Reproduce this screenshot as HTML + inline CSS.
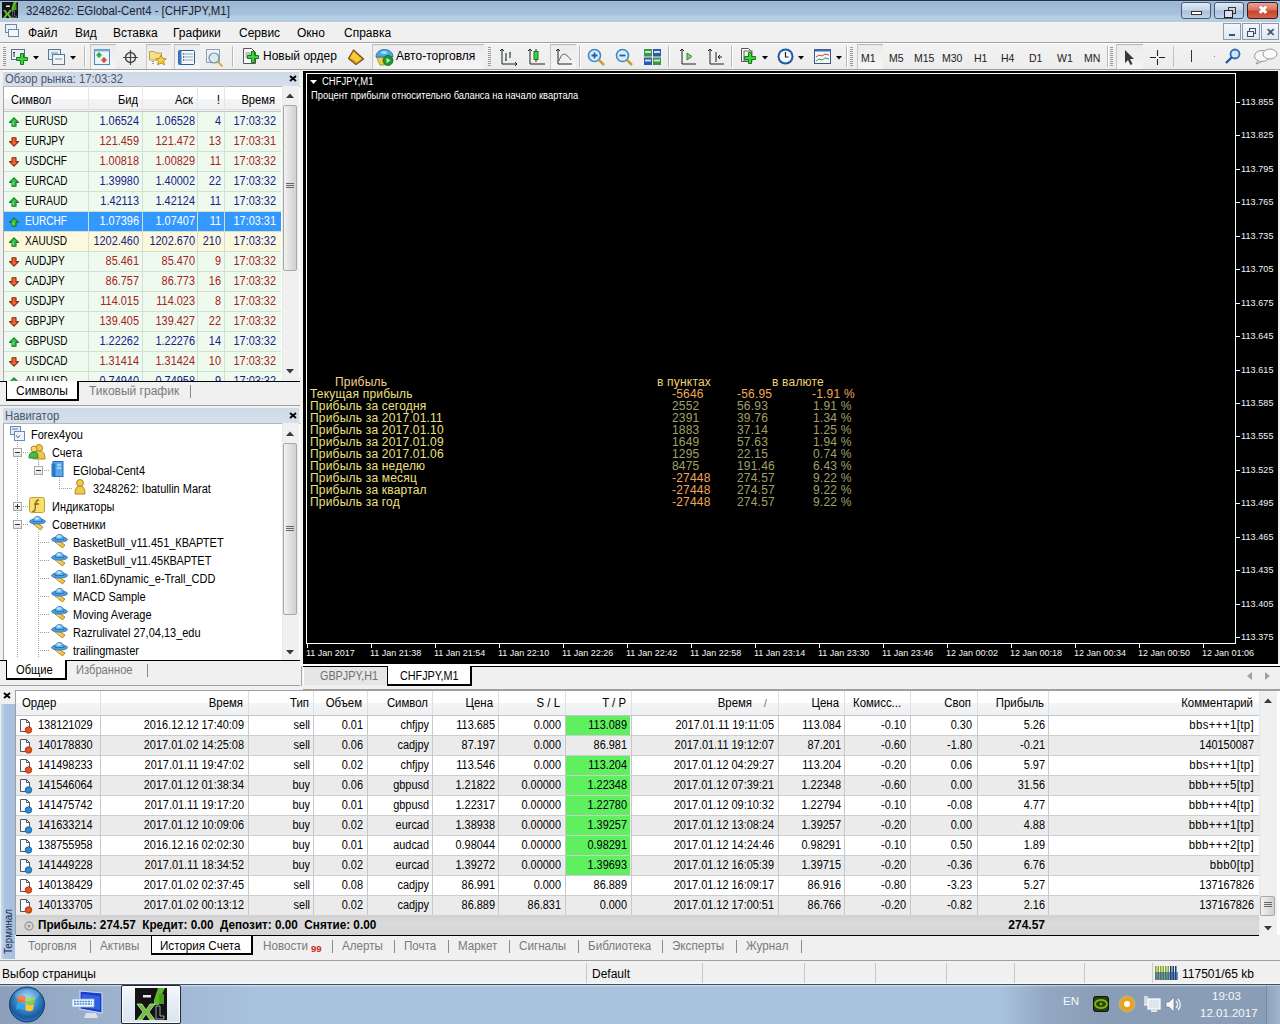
<!DOCTYPE html>
<html><head><meta charset="utf-8"><style>*{margin:0;padding:0;box-sizing:border-box}
html,body{width:1280px;height:1024px;overflow:hidden;background:#f0f0f0;font-family:"Liberation Sans",sans-serif;font-size:12px;color:#000;position:relative}
.a{position:absolute;display:block}
.t{position:absolute;white-space:nowrap;line-height:1.2}
.wb{border:1px solid #4a5a70;border-radius:3px;background:linear-gradient(#dfe9f5,#c3d4e7 45%,#a9c0dc 55%,#c2d6ea)}
</style></head><body>
<div class="a" style="left:0;top:0;width:1280px;height:22px;background:linear-gradient(#1a3350 0,#1a3350 1px,#a7bdd6 1px,#a7bdd6 2px,#9db5cf 2px,#9fb8d2 4px,#a9c3de 15px,#acd0ec 16px,#acd0ec 18px,#b6cfe2 18px,#b6cfe2 20px,#bccad8 20px,#bccad8 22px)"></div>
<svg class="a" style="left:2px;top:2px" width="16" height="16" viewBox="0 0 32 32"><rect x="0" y="0" width="32" height="32" fill="#141414"/><path d="M8 7h8v3H8z" fill="#e8e8f0"/><path d="M23 0h7l-6 12v5h-5v-5z" fill="#5cb82c"/><path d="M24 6h5v10h-5z" fill="#4a9a22"/><path d="M2 16h5l4 6 4-6h5l-6 8 6 8h-5l-4-6-4 6H2l6-8z" fill="#6cc03a"/><path d="M21 18h4v10h4v3h-8z" fill="#141414" stroke="#cfd8e0" stroke-width=".7"/></svg>
<div class="t" style="left:26px;top:4px;font-size:12px;color:#1e1e2e;transform:scaleX(.95);transform-origin:0 0">3248262: EGlobal-Cent4 - [CHFJPY,M1]</div>
<div class="a wb" style="left:1181px;top:2px;width:30px;height:17px"><div class="a" style="left:9px;top:8px;width:11px;height:4px;border:1px solid #333;background:#fff"></div></div>
<div class="a wb" style="left:1214px;top:2px;width:30px;height:17px"><div class="a" style="left:13px;top:4px;width:8px;height:7px;border:1px solid #333"></div><div class="a" style="left:9px;top:7px;width:9px;height:8px;border:1.5px solid #222;background:#dde"></div></div>
<div class="a" style="left:1247px;top:2px;width:31px;height:17px;border:1px solid #3a1c1c;border-radius:3px;background:linear-gradient(#e8a594,#d9735c 45%,#c8452c 55%,#d5634a)"><div class="a" style="left:0;top:0px;width:29px;text-align:center;color:#fff;font-size:12px;line-height:15px;font-weight:bold;text-shadow:0 0 1px #600">&#x2716;</div></div>
<div class="a" style="left:0;top:22px;width:1280px;height:21px;background:linear-gradient(#eef4fa 0,#eef4fa 1px,#f0f0f0 1px);border-bottom:1px solid #a3a3a3"></div>
<div class="a" style="left:5px;top:24px;width:12px;height:9px;border:1px solid #6a86a8;background:#e8f0f8"></div>
<div class="a" style="left:8px;top:29px;width:11px;height:8px;border:1px solid #6a86a8;background:#f4f8fc"></div>
<div class="t" style="left:28px;top:26px;font-size:12px">Файл</div>
<div class="t" style="left:75px;top:26px;font-size:12px">Вид</div>
<div class="t" style="left:113px;top:26px;font-size:12px">Вставка</div>
<div class="t" style="left:173px;top:26px;font-size:12px">Графики</div>
<div class="t" style="left:239px;top:26px;font-size:12px">Сервис</div>
<div class="t" style="left:297px;top:26px;font-size:12px">Окно</div>
<div class="t" style="left:344px;top:26px;font-size:12px">Справка</div>
<div class="a" style="left:1223px;top:23px;width:18px;height:17px;border:1px solid #8c9cb0;background:linear-gradient(#f4f7fb,#dfe7f1)"><div class="a" style="left:5px;top:10px;width:6px;height:2px;background:#3c5070"></div></div>
<div class="a" style="left:1242px;top:23px;width:18px;height:17px;border:1px solid #8c9cb0;background:linear-gradient(#f4f7fb,#dfe7f1)"><div class="a" style="left:6px;top:4px;width:7px;height:6px;border:1px solid #3c5070"></div><div class="a" style="left:4px;top:7px;width:7px;height:6px;border:1px solid #3c5070;background:#eef2f7"></div></div>
<div class="a" style="left:1261px;top:23px;width:18px;height:17px;border:1px solid #8c9cb0;background:linear-gradient(#f4f7fb,#dfe7f1)"><div class="a" style="left:0;top:1px;width:16px;text-align:center;color:#3c5070;font-size:11px;line-height:14px;font-weight:bold">&#x2715;</div></div>
<div class="a" style="left:0;top:43px;width:1280px;height:27px;background:linear-gradient(#f3f3f3,#ececec);border-bottom:1px solid #a0a0a0"></div>
<div class="a" style="left:0;top:43px;width:1280px;height:1px;background:#fff"></div>
<svg class="a" style="left:3px;top:47px" width="3" height="20" viewBox="0 0 3 20"><rect x="0" y="0" width="3" height="1" fill="#9a9a9a"/><rect x="0" y="2" width="3" height="1" fill="#9a9a9a"/><rect x="0" y="4" width="3" height="1" fill="#9a9a9a"/><rect x="0" y="6" width="3" height="1" fill="#9a9a9a"/><rect x="0" y="8" width="3" height="1" fill="#9a9a9a"/><rect x="0" y="10" width="3" height="1" fill="#9a9a9a"/><rect x="0" y="12" width="3" height="1" fill="#9a9a9a"/><rect x="0" y="14" width="3" height="1" fill="#9a9a9a"/><rect x="0" y="16" width="3" height="1" fill="#9a9a9a"/><rect x="0" y="18" width="3" height="1" fill="#9a9a9a"/></svg>
<svg class="a" style="left:11px;top:49px" width="20" height="17" viewBox="0 0 20 17"><rect x="0.5" y="0.5" width="13" height="10" fill="#e8f2fb" stroke="#5a6e86"/><path d="M3 3v5M2 4l1-1 1 1" stroke="#334" fill="none"/><g transform="translate(5,4)"><path d="M4.5 .5h3v4h4v3h-4v4h-3v-4h-4v-3h4z" fill="#3ed43e" stroke="#177a17" stroke-width="1"/></g></svg>
<svg class="a" style="left:33px;top:56px" width="6" height="4" viewBox="0 0 6 4"><path d="M0 0H6L3 3.5Z" fill="#000"/></svg>
<svg class="a" style="left:48px;top:49px" width="18" height="17" viewBox="0 0 18 17"><rect x="0.5" y="0.5" width="12" height="10" fill="#e4eef8" stroke="#5a7896"/><rect x="4.5" y="5.5" width="12" height="10" fill="#eef4fa" stroke="#5a7896"/><path d="M3 4h7M7 10h7" stroke="#7a8ea6"/></svg>
<svg class="a" style="left:70px;top:56px" width="6" height="4" viewBox="0 0 6 4"><path d="M0 0H6L3 3.5Z" fill="#000"/></svg>
<div class="a" style="left:84px;top:46px;width:1px;height:21px;background:#b8b8b8"></div><div class="a" style="left:85px;top:46px;width:1px;height:21px;background:#fff"></div>
<div class="a" style="left:90px;top:44px;width:26px;height:25px;border-top:1px solid #b5b5b5;border-left:1px solid #c8c8c8;background:linear-gradient(#ebebeb,#f5f5f5)"></div>
<svg class="a" style="left:94px;top:49px" width="16" height="16" viewBox="0 0 16 16"><rect x="0.5" y="0.5" width="15" height="15" fill="#eaf6fb" stroke="#4a88b8"/><rect x="0.5" y="0.5" width="15" height="2" fill="#7fb3d9"/><path d="M5 3l3.5 3.5H6.5v2h-3v-2H1.5z" fill="#2eaa3e"/><path d="M10 14l3.5-3.5h-2v-2h-3v2h-2z" fill="#e0443a"/></svg>
<svg class="a" style="left:123px;top:50px" width="16" height="16" viewBox="0 0 16 16"><circle cx="7.5" cy="7.5" r="5" fill="none" stroke="#444" stroke-width="1.4"/><path d="M7.5 0v15M0 7.5h15" stroke="#444" stroke-width="1.2"/></svg>
<div class="a" style="left:146px;top:44px;width:25px;height:25px;border-top:1px solid #b5b5b5;border-left:1px solid #c8c8c8;background:linear-gradient(#ebebeb,#f5f5f5)"></div>
<svg class="a" style="left:149px;top:49px" width="19" height="17" viewBox="0 0 19 17"><path d="M0.5 2.5h5l1 1.5h6v7h-12z" fill="#f4e08a" stroke="#c2a040"/><path d="M12 6l1.6 3.4 3.6.4-2.7 2.4.8 3.6-3.3-1.9-3.3 1.9.8-3.6-2.7-2.4 3.6-.4z" fill="#f2d040" stroke="#b89020"/><path d="M4 12v4" stroke="#555" stroke-dasharray="1 1"/></svg>
<div class="a" style="left:174px;top:44px;width:26px;height:25px;border-top:1px solid #b5b5b5;border-left:1px solid #c8c8c8;background:linear-gradient(#ebebeb,#f5f5f5)"></div>
<svg class="a" style="left:178px;top:50px" width="17" height="15" viewBox="0 0 17 15"><rect x="0.5" y="0.5" width="16" height="14" rx="1" fill="#f4f8fc" stroke="#2c5a9a"/><rect x="0.5" y="0.5" width="3" height="14" fill="#3c78c0"/><path d="M5 4h10M5 7h10M5 10h10" stroke="#8aa"/><path d="M5 4h1M5 7h1M5 10h1" stroke="#135"/></svg>
<svg class="a" style="left:206px;top:49px" width="19" height="18" viewBox="0 0 19 18"><rect x="0.5" y="0.5" width="13" height="13" fill="#eef3f8" stroke="#8aa0b8"/><circle cx="8" cy="9" r="5" fill="#dce8f2" stroke="#7890a8" stroke-width="1.2"/><path d="M11.5 12.5l5 5" stroke="#d8b040" stroke-width="2"/></svg>
<div class="a" style="left:232px;top:46px;width:1px;height:21px;background:#b8b8b8"></div><div class="a" style="left:233px;top:46px;width:1px;height:21px;background:#fff"></div>
<svg class="a" style="left:243px;top:48px" width="20" height="19" viewBox="0 0 20 19"><path d="M0.5 0.5h8l4 4v11h-12z" fill="#f8f8f8" stroke="#555"/><path d="M2.5 5h6M2.5 7h6M2.5 9h5" stroke="#888"/><g transform="translate(4,3)"><path d="M4.5 .5h3v4h4v3h-4v4h-3v-4h-4v-3h4z" fill="#3ed43e" stroke="#177a17" stroke-width="1"/></g></svg>
<div class="t" style="left:263px;top:49px;font-size:12px">Новый ордер</div>
<svg class="a" style="left:345px;top:48px" width="20" height="18" viewBox="0 0 20 18"><path d="M8.5 2L18.5 11 11 16.5 3.5 10.5Z" fill="#e6b020" stroke="#7a5010" stroke-width="1.2" stroke-linejoin="round"/><path d="M8.5 4L16 11 11 14.5 5.5 10Z" fill="#f4cc40"/><path d="M6 11l5 3" stroke="#c89010"/></svg>
<div class="a" style="left:372px;top:44px;width:112px;height:25px;border-top:1px solid #b5b5b5;border-left:1px solid #c8c8c8;background:linear-gradient(#ebebeb,#f5f5f5)"></div>
<svg class="a" style="left:375px;top:48px" width="19" height="18" viewBox="0 0 19 18"><path d="M1.5 9L9.5 9 9.5 17 5 17Z" fill="#f2d040" stroke="#9a8030" stroke-width=".8"/><path d="M1 9c0-4.5 3.5-7.5 8.5-7.5S18 4.5 18 9z" fill="#4aa8e4" stroke="#2a70b0" stroke-width=".9"/><ellipse cx="9" cy="4.5" rx="3" ry="1.5" fill="#a8dcf8"/><circle cx="13" cy="12.5" r="5" fill="#1e9a2e" stroke="#0a6a1a" stroke-width=".8"/><path d="M11.5 10l4 2.5-4 2.5z" fill="#c8f8c8"/></svg>
<div class="t" style="left:396px;top:49px;font-size:12px">Авто-торговля</div>
<svg class="a" style="left:488px;top:47px" width="3" height="20" viewBox="0 0 3 20"><rect x="0" y="0" width="3" height="1" fill="#9a9a9a"/><rect x="0" y="2" width="3" height="1" fill="#9a9a9a"/><rect x="0" y="4" width="3" height="1" fill="#9a9a9a"/><rect x="0" y="6" width="3" height="1" fill="#9a9a9a"/><rect x="0" y="8" width="3" height="1" fill="#9a9a9a"/><rect x="0" y="10" width="3" height="1" fill="#9a9a9a"/><rect x="0" y="12" width="3" height="1" fill="#9a9a9a"/><rect x="0" y="14" width="3" height="1" fill="#9a9a9a"/><rect x="0" y="16" width="3" height="1" fill="#9a9a9a"/><rect x="0" y="18" width="3" height="1" fill="#9a9a9a"/></svg>
<svg class="a" style="left:500px;top:49px" width="17" height="17" viewBox="0 0 17 17"><path d="M2 0v15h15" stroke="#222" fill="none"/><path d="M0 2l2-2 2 2M15 13l2 2-2 2" stroke="#222" fill="none"/><path d="M6 4v8M5 11h1M10 3v6M10 4h1" stroke="#2a4a2a" stroke-width="1.2"/></svg>
<svg class="a" style="left:528px;top:48px" width="17" height="18" viewBox="0 0 17 18"><path d="M2 1v15h15" stroke="#222" fill="none"/><path d="M0 3l2-2 2 2" stroke="#222" fill="none"/><path d="M8 1v13" stroke="#222"/><rect x="6" y="3.5" width="4" height="8" fill="#35d44a" stroke="#1a7a1a"/></svg>
<div class="a" style="left:550px;top:44px;width:26px;height:25px;border-top:1px solid #b5b5b5;border-left:1px solid #c8c8c8;background:linear-gradient(#ebebeb,#f5f5f5)"></div>
<svg class="a" style="left:556px;top:49px" width="16" height="17" viewBox="0 0 16 17"><path d="M2 0v15h14" stroke="#222" fill="none"/><path d="M0 2l2-2 2 2" stroke="#222" fill="none"/><path d="M3 12c3-9 6-9 12-1" stroke="#555" fill="none"/></svg>
<div class="a" style="left:579px;top:46px;width:1px;height:21px;background:#b8b8b8"></div><div class="a" style="left:580px;top:46px;width:1px;height:21px;background:#fff"></div>
<svg class="a" style="left:587px;top:48px" width="19" height="19" viewBox="0 0 19 19"><circle cx="7.5" cy="7.5" r="6" fill="#d8ecfa" stroke="#3c88c8" stroke-width="1.6"/><path d="M4.5 7.5h6M7.5 4.5v6" stroke="#2060a0" stroke-width="1.8"/><path d="M12 12l5 5" stroke="#c8a030" stroke-width="2.5"/></svg>
<svg class="a" style="left:615px;top:48px" width="19" height="19" viewBox="0 0 19 19"><circle cx="7.5" cy="7.5" r="6" fill="#d8ecfa" stroke="#3c88c8" stroke-width="1.6"/><path d="M4.5 7.5h6" stroke="#2060a0" stroke-width="1.8"/><path d="M12 12l5 5" stroke="#c8a030" stroke-width="2.5"/></svg>
<svg class="a" style="left:644px;top:49px" width="17" height="16" viewBox="0 0 17 16"><rect x="0" y="0" width="8" height="7.5" fill="#3a9a3a"/><rect x="9" y="0" width="8" height="7.5" fill="#2a5ab0"/><rect x="0" y="8.5" width="8" height="7.5" fill="#2a5ab0"/><rect x="9" y="8.5" width="8" height="7.5" fill="#3a9a3a"/><path d="M1 3h6M10 3h6M1 11.5h6M10 11.5h6" stroke="#cde" stroke-width="2"/></svg>
<div class="a" style="left:668px;top:46px;width:1px;height:21px;background:#b8b8b8"></div><div class="a" style="left:669px;top:46px;width:1px;height:21px;background:#fff"></div>
<svg class="a" style="left:680px;top:49px" width="16" height="17" viewBox="0 0 16 17"><path d="M2 0v15h14" stroke="#222" fill="none"/><path d="M0 2l2-2 2 2" stroke="#222" fill="none"/><path d="M7 4v7l5-3.5z" fill="#8c8" stroke="#3a8a3a"/></svg>
<svg class="a" style="left:708px;top:49px" width="16" height="17" viewBox="0 0 16 17"><path d="M2 0v15h14" stroke="#222" fill="none"/><path d="M0 2l2-2 2 2" stroke="#222" fill="none"/><path d="M8 3v10" stroke="#222"/><path d="M14 8H10M12 6l-2 2 2 2" stroke="#222" fill="none"/></svg>
<div class="a" style="left:731px;top:46px;width:1px;height:21px;background:#b8b8b8"></div><div class="a" style="left:732px;top:46px;width:1px;height:21px;background:#fff"></div>
<svg class="a" style="left:741px;top:48px" width="17" height="19" viewBox="0 0 17 19"><path d="M0.5 0.5h7l3 3v10h-10z" fill="#fafafa" stroke="#555"/><rect x="3" y="3" width="8" height="10" fill="#f0f0f0" stroke="#666"/><g transform="translate(3,4)"><path d="M4.5 .5h3v4h4v3h-4v4h-3v-4h-4v-3h4z" fill="#3ed43e" stroke="#177a17" stroke-width="1"/></g></svg>
<svg class="a" style="left:762px;top:56px" width="6" height="4" viewBox="0 0 6 4"><path d="M0 0H6L3 3.5Z" fill="#000"/></svg>
<svg class="a" style="left:777px;top:48px" width="17" height="17" viewBox="0 0 17 17"><circle cx="8.5" cy="8.5" r="8" fill="#1a5aa8"/><circle cx="8.5" cy="8.5" r="6" fill="#f4f8fc"/><path d="M8.5 4v5h3" stroke="#222" stroke-width="1.2" fill="none"/></svg>
<svg class="a" style="left:798px;top:56px" width="6" height="4" viewBox="0 0 6 4"><path d="M0 0H6L3 3.5Z" fill="#000"/></svg>
<svg class="a" style="left:814px;top:49px" width="17" height="15" viewBox="0 0 17 15"><rect x="0.5" y="0.5" width="16" height="14" fill="#f4f8fc" stroke="#3a5a8a"/><rect x="0.5" y="0.5" width="16" height="2" fill="#3a6ab0"/><path d="M2 8l3-2 3 1 3-2 4 1" stroke="#d04040" fill="none"/><path d="M2 12l3-2 3 1 3-2 4 1" stroke="#30a030" fill="none"/></svg>
<svg class="a" style="left:836px;top:56px" width="6" height="4" viewBox="0 0 6 4"><path d="M0 0H6L3 3.5Z" fill="#000"/></svg>
<div class="a" style="left:846px;top:46px;width:1px;height:21px;background:#b8b8b8"></div><div class="a" style="left:847px;top:46px;width:1px;height:21px;background:#fff"></div>
<svg class="a" style="left:850px;top:47px" width="3" height="20" viewBox="0 0 3 20"><rect x="0" y="0" width="3" height="1" fill="#9a9a9a"/><rect x="0" y="2" width="3" height="1" fill="#9a9a9a"/><rect x="0" y="4" width="3" height="1" fill="#9a9a9a"/><rect x="0" y="6" width="3" height="1" fill="#9a9a9a"/><rect x="0" y="8" width="3" height="1" fill="#9a9a9a"/><rect x="0" y="10" width="3" height="1" fill="#9a9a9a"/><rect x="0" y="12" width="3" height="1" fill="#9a9a9a"/><rect x="0" y="14" width="3" height="1" fill="#9a9a9a"/><rect x="0" y="16" width="3" height="1" fill="#9a9a9a"/><rect x="0" y="18" width="3" height="1" fill="#9a9a9a"/></svg>
<div class="a" style="left:857px;top:44px;width:26px;height:25px;border-top:1px solid #b5b5b5;border-left:1px solid #c8c8c8;background:linear-gradient(#ebebeb,#f5f5f5)"></div>
<div class="t" style="left:861px;top:52px;font-size:10.5px;color:#222">M1</div>
<div class="t" style="left:889px;top:52px;font-size:10.5px;color:#222">M5</div>
<div class="t" style="left:914px;top:52px;font-size:10.5px;color:#222">M15</div>
<div class="t" style="left:942px;top:52px;font-size:10.5px;color:#222">M30</div>
<div class="t" style="left:974px;top:52px;font-size:10.5px;color:#222">H1</div>
<div class="t" style="left:1001px;top:52px;font-size:10.5px;color:#222">H4</div>
<div class="t" style="left:1029px;top:52px;font-size:10.5px;color:#222">D1</div>
<div class="t" style="left:1057px;top:52px;font-size:10.5px;color:#222">W1</div>
<div class="t" style="left:1084px;top:52px;font-size:10.5px;color:#222">MN</div>
<div class="a" style="left:1107px;top:46px;width:1px;height:21px;background:#b8b8b8"></div><div class="a" style="left:1108px;top:46px;width:1px;height:21px;background:#fff"></div>
<svg class="a" style="left:1110px;top:47px" width="3" height="20" viewBox="0 0 3 20"><rect x="0" y="0" width="3" height="1" fill="#9a9a9a"/><rect x="0" y="2" width="3" height="1" fill="#9a9a9a"/><rect x="0" y="4" width="3" height="1" fill="#9a9a9a"/><rect x="0" y="6" width="3" height="1" fill="#9a9a9a"/><rect x="0" y="8" width="3" height="1" fill="#9a9a9a"/><rect x="0" y="10" width="3" height="1" fill="#9a9a9a"/><rect x="0" y="12" width="3" height="1" fill="#9a9a9a"/><rect x="0" y="14" width="3" height="1" fill="#9a9a9a"/><rect x="0" y="16" width="3" height="1" fill="#9a9a9a"/><rect x="0" y="18" width="3" height="1" fill="#9a9a9a"/></svg>
<div class="a" style="left:1116px;top:44px;width:27px;height:25px;border-top:1px solid #b5b5b5;border-left:1px solid #c8c8c8;background:linear-gradient(#ebebeb,#f5f5f5)"></div>
<svg class="a" style="left:1124px;top:49px" width="12" height="17" viewBox="0 0 12 17"><path d="M1 1v13l3-3 2.5 5 2-1-2.5-5h4z" fill="#383838"/></svg>
<svg class="a" style="left:1150px;top:50px" width="15" height="15" viewBox="0 0 15 15"><path d="M7.5 0v6M7.5 9v6M0 7.5h6M9 7.5h6" stroke="#222" stroke-width="1.1"/></svg>
<div class="a" style="left:1173px;top:46px;width:1px;height:21px;background:#c0c0c0"></div>
<div class="a" style="left:1191px;top:50px;width:1px;height:12px;background:#333"></div>
<div class="a" style="left:1214px;top:56px;width:1px;height:1px;background:#888"></div>
<svg class="a" style="left:1225px;top:48px" width="16" height="17" viewBox="0 0 16 17"><circle cx="10" cy="6" r="4.5" fill="#cfe6fa" stroke="#2a6ab8" stroke-width="1.8"/><path d="M7 9l-6 6" stroke="#2a5aa0" stroke-width="2.4"/></svg>
<svg class="a" style="left:1253px;top:48px" width="26" height="17" viewBox="0 0 26 17"><ellipse cx="9" cy="8" rx="7.5" ry="5.5" fill="#f8f8f8" stroke="#999"/><ellipse cx="17" cy="6" rx="7" ry="5" fill="#fafafa" stroke="#999"/><path d="M5 13l-2 3 5-2" fill="#fafafa" stroke="#999"/></svg>
<div class="a" style="left:3px;top:70px;width:297px;height:2px;background:#fafafa"></div>
<div class="a" style="left:3px;top:72px;width:296px;height:14px;background:linear-gradient(#cfdae8,#d6e0ec);"></div>
<div class="t" style="left:5px;top:72px;font-size:12px;color:#4a5668;transform:scaleX(.94);transform-origin:0 0">Обзор рынка: 17:03:32</div>
<svg class="a" style="left:289px;top:75px" width="8" height="7" viewBox="0 0 8 7"><path d="M1 1l6 5M7 1L1 6" stroke="#000" stroke-width="1.8"/></svg>
<div class="a" style="left:3px;top:86px;width:297px;height:295px;background:#fff;border-left:1px solid #a9a9a9;border-top:1px solid #b8b8b8"></div>
<div class="a" style="left:4px;top:87px;width:277px;height:25px;background:linear-gradient(#fff 0,#fff 50%,#f3f4f6 50%,#eef0f2);border-bottom:1px solid #c8c8c8"></div>
<div class="a" style="left:4px;top:109px;width:277px;height:1px;background:#dcdcdc"></div>
<div class="a" style="left:88px;top:86px;width:1px;height:24px;background:#e6e6e6"></div>
<div class="a" style="left:142px;top:86px;width:1px;height:24px;background:#e6e6e6"></div>
<div class="a" style="left:197px;top:86px;width:1px;height:24px;background:#e6e6e6"></div>
<div class="a" style="left:224px;top:86px;width:1px;height:24px;background:#e6e6e6"></div>
<div class="t" style="left:11px;top:93px;font-size:12px;transform:scaleX(.93);transform-origin:0 0">Символ</div>
<div class="t" style="left:88px;top:93px;font-size:12px;width:50px;text-align:right;transform:scaleX(.93);transform-origin:100% 0">Бид</div>
<div class="t" style="left:142px;top:93px;font-size:12px;width:51px;text-align:right;transform:scaleX(.93);transform-origin:100% 0">Аск</div>
<div class="t" style="left:197px;top:93px;font-size:12px;width:23px;text-align:right">!</div>
<div class="t" style="left:224px;top:93px;font-size:12px;width:51px;text-align:right;transform:scaleX(.93);transform-origin:100% 0">Время</div>
<div class="a" style="left:4px;top:112px;width:277px;height:20px;background:#effaef;border-bottom:1px solid #d2e0d2"></div>
<div class="a" style="left:88px;top:112px;width:1px;height:20px;background:#d2e0d2"></div>
<div class="a" style="left:142px;top:112px;width:1px;height:20px;background:#d2e0d2"></div>
<div class="a" style="left:197px;top:112px;width:1px;height:20px;background:#d2e0d2"></div>
<div class="a" style="left:224px;top:112px;width:1px;height:20px;background:#d2e0d2"></div>
<svg class="a" style="left:9px;top:117px" width="11" height="10" viewBox="0 0 11 10"><path d="M5 0.8L9.6 5.4H7V9.3H3V5.4H0.4Z" fill="#3cc04c" stroke="#127a22" stroke-width="1.1" stroke-linejoin="round"/><path d="M4 5v3" stroke="#9e9" stroke-width="1"/></svg>
<div class="t" style="left:24.5px;top:114px;font-size:12px;color:#000;transform:scaleX(.84);transform-origin:0 0">EURUSD</div>
<div class="t" style="left:88px;top:114px;font-size:12px;color:#14208c;width:51px;text-align:right;transform:scaleX(.91);transform-origin:100% 0">1.06524</div>
<div class="t" style="left:142px;top:114px;font-size:12px;color:#14208c;width:53px;text-align:right;transform:scaleX(.91);transform-origin:100% 0">1.06528</div>
<div class="t" style="left:197px;top:114px;font-size:12px;color:#14208c;width:24px;text-align:right;transform:scaleX(.91);transform-origin:100% 0">4</div>
<div class="t" style="left:224px;top:114px;font-size:12px;color:#14208c;width:52px;text-align:right;transform:scaleX(.91);transform-origin:100% 0">17:03:32</div>
<div class="a" style="left:4px;top:132px;width:277px;height:20px;background:#effaef;border-bottom:1px solid #d2e0d2"></div>
<div class="a" style="left:88px;top:132px;width:1px;height:20px;background:#d2e0d2"></div>
<div class="a" style="left:142px;top:132px;width:1px;height:20px;background:#d2e0d2"></div>
<div class="a" style="left:197px;top:132px;width:1px;height:20px;background:#d2e0d2"></div>
<div class="a" style="left:224px;top:132px;width:1px;height:20px;background:#d2e0d2"></div>
<svg class="a" style="left:9px;top:137px" width="11" height="10" viewBox="0 0 11 10"><path d="M5 9.2L9.6 4.6H7V0.7H3V4.6H0.4Z" fill="#f06430" stroke="#8a2a10" stroke-width="1.1" stroke-linejoin="round"/></svg>
<div class="t" style="left:24.5px;top:134px;font-size:12px;color:#000;transform:scaleX(.84);transform-origin:0 0">EURJPY</div>
<div class="t" style="left:88px;top:134px;font-size:12px;color:#a82020;width:51px;text-align:right;transform:scaleX(.91);transform-origin:100% 0">121.459</div>
<div class="t" style="left:142px;top:134px;font-size:12px;color:#a82020;width:53px;text-align:right;transform:scaleX(.91);transform-origin:100% 0">121.472</div>
<div class="t" style="left:197px;top:134px;font-size:12px;color:#a82020;width:24px;text-align:right;transform:scaleX(.91);transform-origin:100% 0">13</div>
<div class="t" style="left:224px;top:134px;font-size:12px;color:#a82020;width:52px;text-align:right;transform:scaleX(.91);transform-origin:100% 0">17:03:31</div>
<div class="a" style="left:4px;top:152px;width:277px;height:20px;background:#effaef;border-bottom:1px solid #d2e0d2"></div>
<div class="a" style="left:88px;top:152px;width:1px;height:20px;background:#d2e0d2"></div>
<div class="a" style="left:142px;top:152px;width:1px;height:20px;background:#d2e0d2"></div>
<div class="a" style="left:197px;top:152px;width:1px;height:20px;background:#d2e0d2"></div>
<div class="a" style="left:224px;top:152px;width:1px;height:20px;background:#d2e0d2"></div>
<svg class="a" style="left:9px;top:157px" width="11" height="10" viewBox="0 0 11 10"><path d="M5 9.2L9.6 4.6H7V0.7H3V4.6H0.4Z" fill="#f06430" stroke="#8a2a10" stroke-width="1.1" stroke-linejoin="round"/></svg>
<div class="t" style="left:24.5px;top:154px;font-size:12px;color:#000;transform:scaleX(.84);transform-origin:0 0">USDCHF</div>
<div class="t" style="left:88px;top:154px;font-size:12px;color:#a82020;width:51px;text-align:right;transform:scaleX(.91);transform-origin:100% 0">1.00818</div>
<div class="t" style="left:142px;top:154px;font-size:12px;color:#a82020;width:53px;text-align:right;transform:scaleX(.91);transform-origin:100% 0">1.00829</div>
<div class="t" style="left:197px;top:154px;font-size:12px;color:#a82020;width:24px;text-align:right;transform:scaleX(.91);transform-origin:100% 0">11</div>
<div class="t" style="left:224px;top:154px;font-size:12px;color:#a82020;width:52px;text-align:right;transform:scaleX(.91);transform-origin:100% 0">17:03:32</div>
<div class="a" style="left:4px;top:172px;width:277px;height:20px;background:#effaef;border-bottom:1px solid #d2e0d2"></div>
<div class="a" style="left:88px;top:172px;width:1px;height:20px;background:#d2e0d2"></div>
<div class="a" style="left:142px;top:172px;width:1px;height:20px;background:#d2e0d2"></div>
<div class="a" style="left:197px;top:172px;width:1px;height:20px;background:#d2e0d2"></div>
<div class="a" style="left:224px;top:172px;width:1px;height:20px;background:#d2e0d2"></div>
<svg class="a" style="left:9px;top:177px" width="11" height="10" viewBox="0 0 11 10"><path d="M5 0.8L9.6 5.4H7V9.3H3V5.4H0.4Z" fill="#3cc04c" stroke="#127a22" stroke-width="1.1" stroke-linejoin="round"/><path d="M4 5v3" stroke="#9e9" stroke-width="1"/></svg>
<div class="t" style="left:24.5px;top:174px;font-size:12px;color:#000;transform:scaleX(.84);transform-origin:0 0">EURCAD</div>
<div class="t" style="left:88px;top:174px;font-size:12px;color:#14208c;width:51px;text-align:right;transform:scaleX(.91);transform-origin:100% 0">1.39980</div>
<div class="t" style="left:142px;top:174px;font-size:12px;color:#14208c;width:53px;text-align:right;transform:scaleX(.91);transform-origin:100% 0">1.40002</div>
<div class="t" style="left:197px;top:174px;font-size:12px;color:#14208c;width:24px;text-align:right;transform:scaleX(.91);transform-origin:100% 0">22</div>
<div class="t" style="left:224px;top:174px;font-size:12px;color:#14208c;width:52px;text-align:right;transform:scaleX(.91);transform-origin:100% 0">17:03:32</div>
<div class="a" style="left:4px;top:192px;width:277px;height:20px;background:#effaef;border-bottom:1px solid #d2e0d2"></div>
<div class="a" style="left:88px;top:192px;width:1px;height:20px;background:#d2e0d2"></div>
<div class="a" style="left:142px;top:192px;width:1px;height:20px;background:#d2e0d2"></div>
<div class="a" style="left:197px;top:192px;width:1px;height:20px;background:#d2e0d2"></div>
<div class="a" style="left:224px;top:192px;width:1px;height:20px;background:#d2e0d2"></div>
<svg class="a" style="left:9px;top:197px" width="11" height="10" viewBox="0 0 11 10"><path d="M5 0.8L9.6 5.4H7V9.3H3V5.4H0.4Z" fill="#3cc04c" stroke="#127a22" stroke-width="1.1" stroke-linejoin="round"/><path d="M4 5v3" stroke="#9e9" stroke-width="1"/></svg>
<div class="t" style="left:24.5px;top:194px;font-size:12px;color:#000;transform:scaleX(.84);transform-origin:0 0">EURAUD</div>
<div class="t" style="left:88px;top:194px;font-size:12px;color:#14208c;width:51px;text-align:right;transform:scaleX(.91);transform-origin:100% 0">1.42113</div>
<div class="t" style="left:142px;top:194px;font-size:12px;color:#14208c;width:53px;text-align:right;transform:scaleX(.91);transform-origin:100% 0">1.42124</div>
<div class="t" style="left:197px;top:194px;font-size:12px;color:#14208c;width:24px;text-align:right;transform:scaleX(.91);transform-origin:100% 0">11</div>
<div class="t" style="left:224px;top:194px;font-size:12px;color:#14208c;width:52px;text-align:right;transform:scaleX(.91);transform-origin:100% 0">17:03:32</div>
<div class="a" style="left:4px;top:212px;width:277px;height:20px;background:#3399ff;border-bottom:1px solid #d2e0d2"></div>
<div class="a" style="left:88px;top:212px;width:1px;height:20px;background:#d2e0d2"></div>
<div class="a" style="left:142px;top:212px;width:1px;height:20px;background:#d2e0d2"></div>
<div class="a" style="left:197px;top:212px;width:1px;height:20px;background:#d2e0d2"></div>
<div class="a" style="left:224px;top:212px;width:1px;height:20px;background:#d2e0d2"></div>
<svg class="a" style="left:9px;top:217px" width="11" height="10" viewBox="0 0 11 10"><path d="M5 0.8L9.6 5.4H7V9.3H3V5.4H0.4Z" fill="#3cc04c" stroke="#127a22" stroke-width="1.1" stroke-linejoin="round"/><path d="M4 5v3" stroke="#9e9" stroke-width="1"/></svg>
<div class="t" style="left:24.5px;top:214px;font-size:12px;color:#fff;transform:scaleX(.84);transform-origin:0 0">EURCHF</div>
<div class="t" style="left:88px;top:214px;font-size:12px;color:#ffffff;width:51px;text-align:right;transform:scaleX(.91);transform-origin:100% 0">1.07396</div>
<div class="t" style="left:142px;top:214px;font-size:12px;color:#ffffff;width:53px;text-align:right;transform:scaleX(.91);transform-origin:100% 0">1.07407</div>
<div class="t" style="left:197px;top:214px;font-size:12px;color:#ffffff;width:24px;text-align:right;transform:scaleX(.91);transform-origin:100% 0">11</div>
<div class="t" style="left:224px;top:214px;font-size:12px;color:#ffffff;width:52px;text-align:right;transform:scaleX(.91);transform-origin:100% 0">17:03:31</div>
<div class="a" style="left:4px;top:232px;width:277px;height:20px;background:#fbf8dc;border-bottom:1px solid #d2e0d2"></div>
<div class="a" style="left:88px;top:232px;width:1px;height:20px;background:#d2e0d2"></div>
<div class="a" style="left:142px;top:232px;width:1px;height:20px;background:#d2e0d2"></div>
<div class="a" style="left:197px;top:232px;width:1px;height:20px;background:#d2e0d2"></div>
<div class="a" style="left:224px;top:232px;width:1px;height:20px;background:#d2e0d2"></div>
<svg class="a" style="left:9px;top:237px" width="11" height="10" viewBox="0 0 11 10"><path d="M5 0.8L9.6 5.4H7V9.3H3V5.4H0.4Z" fill="#3cc04c" stroke="#127a22" stroke-width="1.1" stroke-linejoin="round"/><path d="M4 5v3" stroke="#9e9" stroke-width="1"/></svg>
<div class="t" style="left:24.5px;top:234px;font-size:12px;color:#000;transform:scaleX(.84);transform-origin:0 0">XAUUSD</div>
<div class="t" style="left:88px;top:234px;font-size:12px;color:#14208c;width:51px;text-align:right;transform:scaleX(.91);transform-origin:100% 0">1202.460</div>
<div class="t" style="left:142px;top:234px;font-size:12px;color:#14208c;width:53px;text-align:right;transform:scaleX(.91);transform-origin:100% 0">1202.670</div>
<div class="t" style="left:197px;top:234px;font-size:12px;color:#14208c;width:24px;text-align:right;transform:scaleX(.91);transform-origin:100% 0">210</div>
<div class="t" style="left:224px;top:234px;font-size:12px;color:#14208c;width:52px;text-align:right;transform:scaleX(.91);transform-origin:100% 0">17:03:32</div>
<div class="a" style="left:4px;top:252px;width:277px;height:20px;background:#effaef;border-bottom:1px solid #d2e0d2"></div>
<div class="a" style="left:88px;top:252px;width:1px;height:20px;background:#d2e0d2"></div>
<div class="a" style="left:142px;top:252px;width:1px;height:20px;background:#d2e0d2"></div>
<div class="a" style="left:197px;top:252px;width:1px;height:20px;background:#d2e0d2"></div>
<div class="a" style="left:224px;top:252px;width:1px;height:20px;background:#d2e0d2"></div>
<svg class="a" style="left:9px;top:257px" width="11" height="10" viewBox="0 0 11 10"><path d="M5 9.2L9.6 4.6H7V0.7H3V4.6H0.4Z" fill="#f06430" stroke="#8a2a10" stroke-width="1.1" stroke-linejoin="round"/></svg>
<div class="t" style="left:24.5px;top:254px;font-size:12px;color:#000;transform:scaleX(.84);transform-origin:0 0">AUDJPY</div>
<div class="t" style="left:88px;top:254px;font-size:12px;color:#a82020;width:51px;text-align:right;transform:scaleX(.91);transform-origin:100% 0">85.461</div>
<div class="t" style="left:142px;top:254px;font-size:12px;color:#a82020;width:53px;text-align:right;transform:scaleX(.91);transform-origin:100% 0">85.470</div>
<div class="t" style="left:197px;top:254px;font-size:12px;color:#a82020;width:24px;text-align:right;transform:scaleX(.91);transform-origin:100% 0">9</div>
<div class="t" style="left:224px;top:254px;font-size:12px;color:#a82020;width:52px;text-align:right;transform:scaleX(.91);transform-origin:100% 0">17:03:32</div>
<div class="a" style="left:4px;top:272px;width:277px;height:20px;background:#effaef;border-bottom:1px solid #d2e0d2"></div>
<div class="a" style="left:88px;top:272px;width:1px;height:20px;background:#d2e0d2"></div>
<div class="a" style="left:142px;top:272px;width:1px;height:20px;background:#d2e0d2"></div>
<div class="a" style="left:197px;top:272px;width:1px;height:20px;background:#d2e0d2"></div>
<div class="a" style="left:224px;top:272px;width:1px;height:20px;background:#d2e0d2"></div>
<svg class="a" style="left:9px;top:277px" width="11" height="10" viewBox="0 0 11 10"><path d="M5 9.2L9.6 4.6H7V0.7H3V4.6H0.4Z" fill="#f06430" stroke="#8a2a10" stroke-width="1.1" stroke-linejoin="round"/></svg>
<div class="t" style="left:24.5px;top:274px;font-size:12px;color:#000;transform:scaleX(.84);transform-origin:0 0">CADJPY</div>
<div class="t" style="left:88px;top:274px;font-size:12px;color:#a82020;width:51px;text-align:right;transform:scaleX(.91);transform-origin:100% 0">86.757</div>
<div class="t" style="left:142px;top:274px;font-size:12px;color:#a82020;width:53px;text-align:right;transform:scaleX(.91);transform-origin:100% 0">86.773</div>
<div class="t" style="left:197px;top:274px;font-size:12px;color:#a82020;width:24px;text-align:right;transform:scaleX(.91);transform-origin:100% 0">16</div>
<div class="t" style="left:224px;top:274px;font-size:12px;color:#a82020;width:52px;text-align:right;transform:scaleX(.91);transform-origin:100% 0">17:03:32</div>
<div class="a" style="left:4px;top:292px;width:277px;height:20px;background:#effaef;border-bottom:1px solid #d2e0d2"></div>
<div class="a" style="left:88px;top:292px;width:1px;height:20px;background:#d2e0d2"></div>
<div class="a" style="left:142px;top:292px;width:1px;height:20px;background:#d2e0d2"></div>
<div class="a" style="left:197px;top:292px;width:1px;height:20px;background:#d2e0d2"></div>
<div class="a" style="left:224px;top:292px;width:1px;height:20px;background:#d2e0d2"></div>
<svg class="a" style="left:9px;top:297px" width="11" height="10" viewBox="0 0 11 10"><path d="M5 9.2L9.6 4.6H7V0.7H3V4.6H0.4Z" fill="#f06430" stroke="#8a2a10" stroke-width="1.1" stroke-linejoin="round"/></svg>
<div class="t" style="left:24.5px;top:294px;font-size:12px;color:#000;transform:scaleX(.84);transform-origin:0 0">USDJPY</div>
<div class="t" style="left:88px;top:294px;font-size:12px;color:#a82020;width:51px;text-align:right;transform:scaleX(.91);transform-origin:100% 0">114.015</div>
<div class="t" style="left:142px;top:294px;font-size:12px;color:#a82020;width:53px;text-align:right;transform:scaleX(.91);transform-origin:100% 0">114.023</div>
<div class="t" style="left:197px;top:294px;font-size:12px;color:#a82020;width:24px;text-align:right;transform:scaleX(.91);transform-origin:100% 0">8</div>
<div class="t" style="left:224px;top:294px;font-size:12px;color:#a82020;width:52px;text-align:right;transform:scaleX(.91);transform-origin:100% 0">17:03:32</div>
<div class="a" style="left:4px;top:312px;width:277px;height:20px;background:#effaef;border-bottom:1px solid #d2e0d2"></div>
<div class="a" style="left:88px;top:312px;width:1px;height:20px;background:#d2e0d2"></div>
<div class="a" style="left:142px;top:312px;width:1px;height:20px;background:#d2e0d2"></div>
<div class="a" style="left:197px;top:312px;width:1px;height:20px;background:#d2e0d2"></div>
<div class="a" style="left:224px;top:312px;width:1px;height:20px;background:#d2e0d2"></div>
<svg class="a" style="left:9px;top:317px" width="11" height="10" viewBox="0 0 11 10"><path d="M5 9.2L9.6 4.6H7V0.7H3V4.6H0.4Z" fill="#f06430" stroke="#8a2a10" stroke-width="1.1" stroke-linejoin="round"/></svg>
<div class="t" style="left:24.5px;top:314px;font-size:12px;color:#000;transform:scaleX(.84);transform-origin:0 0">GBPJPY</div>
<div class="t" style="left:88px;top:314px;font-size:12px;color:#a82020;width:51px;text-align:right;transform:scaleX(.91);transform-origin:100% 0">139.405</div>
<div class="t" style="left:142px;top:314px;font-size:12px;color:#a82020;width:53px;text-align:right;transform:scaleX(.91);transform-origin:100% 0">139.427</div>
<div class="t" style="left:197px;top:314px;font-size:12px;color:#a82020;width:24px;text-align:right;transform:scaleX(.91);transform-origin:100% 0">22</div>
<div class="t" style="left:224px;top:314px;font-size:12px;color:#a82020;width:52px;text-align:right;transform:scaleX(.91);transform-origin:100% 0">17:03:32</div>
<div class="a" style="left:4px;top:332px;width:277px;height:20px;background:#effaef;border-bottom:1px solid #d2e0d2"></div>
<div class="a" style="left:88px;top:332px;width:1px;height:20px;background:#d2e0d2"></div>
<div class="a" style="left:142px;top:332px;width:1px;height:20px;background:#d2e0d2"></div>
<div class="a" style="left:197px;top:332px;width:1px;height:20px;background:#d2e0d2"></div>
<div class="a" style="left:224px;top:332px;width:1px;height:20px;background:#d2e0d2"></div>
<svg class="a" style="left:9px;top:337px" width="11" height="10" viewBox="0 0 11 10"><path d="M5 0.8L9.6 5.4H7V9.3H3V5.4H0.4Z" fill="#3cc04c" stroke="#127a22" stroke-width="1.1" stroke-linejoin="round"/><path d="M4 5v3" stroke="#9e9" stroke-width="1"/></svg>
<div class="t" style="left:24.5px;top:334px;font-size:12px;color:#000;transform:scaleX(.84);transform-origin:0 0">GBPUSD</div>
<div class="t" style="left:88px;top:334px;font-size:12px;color:#14208c;width:51px;text-align:right;transform:scaleX(.91);transform-origin:100% 0">1.22262</div>
<div class="t" style="left:142px;top:334px;font-size:12px;color:#14208c;width:53px;text-align:right;transform:scaleX(.91);transform-origin:100% 0">1.22276</div>
<div class="t" style="left:197px;top:334px;font-size:12px;color:#14208c;width:24px;text-align:right;transform:scaleX(.91);transform-origin:100% 0">14</div>
<div class="t" style="left:224px;top:334px;font-size:12px;color:#14208c;width:52px;text-align:right;transform:scaleX(.91);transform-origin:100% 0">17:03:32</div>
<div class="a" style="left:4px;top:352px;width:277px;height:20px;background:#effaef;border-bottom:1px solid #d2e0d2"></div>
<div class="a" style="left:88px;top:352px;width:1px;height:20px;background:#d2e0d2"></div>
<div class="a" style="left:142px;top:352px;width:1px;height:20px;background:#d2e0d2"></div>
<div class="a" style="left:197px;top:352px;width:1px;height:20px;background:#d2e0d2"></div>
<div class="a" style="left:224px;top:352px;width:1px;height:20px;background:#d2e0d2"></div>
<svg class="a" style="left:9px;top:357px" width="11" height="10" viewBox="0 0 11 10"><path d="M5 9.2L9.6 4.6H7V0.7H3V4.6H0.4Z" fill="#f06430" stroke="#8a2a10" stroke-width="1.1" stroke-linejoin="round"/></svg>
<div class="t" style="left:24.5px;top:354px;font-size:12px;color:#000;transform:scaleX(.84);transform-origin:0 0">USDCAD</div>
<div class="t" style="left:88px;top:354px;font-size:12px;color:#a82020;width:51px;text-align:right;transform:scaleX(.91);transform-origin:100% 0">1.31414</div>
<div class="t" style="left:142px;top:354px;font-size:12px;color:#a82020;width:53px;text-align:right;transform:scaleX(.91);transform-origin:100% 0">1.31424</div>
<div class="t" style="left:197px;top:354px;font-size:12px;color:#a82020;width:24px;text-align:right;transform:scaleX(.91);transform-origin:100% 0">10</div>
<div class="t" style="left:224px;top:354px;font-size:12px;color:#a82020;width:52px;text-align:right;transform:scaleX(.91);transform-origin:100% 0">17:03:32</div>
<div class="a" style="left:4px;top:372px;width:277px;height:20px;background:#effaef;border-bottom:1px solid #d2e0d2"></div>
<div class="a" style="left:88px;top:372px;width:1px;height:20px;background:#d2e0d2"></div>
<div class="a" style="left:142px;top:372px;width:1px;height:20px;background:#d2e0d2"></div>
<div class="a" style="left:197px;top:372px;width:1px;height:20px;background:#d2e0d2"></div>
<div class="a" style="left:224px;top:372px;width:1px;height:20px;background:#d2e0d2"></div>
<svg class="a" style="left:9px;top:377px" width="11" height="10" viewBox="0 0 11 10"><path d="M5 0.8L9.6 5.4H7V9.3H3V5.4H0.4Z" fill="#3cc04c" stroke="#127a22" stroke-width="1.1" stroke-linejoin="round"/><path d="M4 5v3" stroke="#9e9" stroke-width="1"/></svg>
<div class="t" style="left:24.5px;top:374px;font-size:12px;color:#000;transform:scaleX(.84);transform-origin:0 0">AUDUSD</div>
<div class="t" style="left:88px;top:374px;font-size:12px;color:#14208c;width:51px;text-align:right;transform:scaleX(.91);transform-origin:100% 0">0.74940</div>
<div class="t" style="left:142px;top:374px;font-size:12px;color:#14208c;width:53px;text-align:right;transform:scaleX(.91);transform-origin:100% 0">0.74958</div>
<div class="t" style="left:197px;top:374px;font-size:12px;color:#14208c;width:24px;text-align:right;transform:scaleX(.91);transform-origin:100% 0">9</div>
<div class="t" style="left:224px;top:374px;font-size:12px;color:#14208c;width:52px;text-align:right;transform:scaleX(.91);transform-origin:100% 0">17:03:32</div>
<div class="a" style="left:282px;top:86px;width:17px;height:295px;background:#f0f0f0;border-left:1px solid #e8e8e8"></div>
<svg class="a" style="left:286px;top:93px" width="8" height="5" viewBox="0 0 8 5"><path d="M0 5L4 0.5 8 5Z" fill="#3a3a3a"/></svg>
<svg class="a" style="left:286px;top:369px" width="8" height="5" viewBox="0 0 8 5"><path d="M0 0L4 4.5 8 0Z" fill="#3a3a3a"/></svg>
<div class="a" style="left:283px;top:105px;width:14px;height:166px;border:1px solid #a8a8a8;border-radius:2px;background:linear-gradient(90deg,#f2f2f2,#e0e0e0 50%,#d0d0d0)"></div>
<svg class="a" style="left:286px;top:183px" width="8" height="6" viewBox="0 0 8 6"><path d="M0 0.5h8M0 2.5h8M0 4.5h8" stroke="#666"/></svg>
<div class="a" style="left:0px;top:381px;width:300px;height:25px;background:#f0f0f0;border-top:1px solid #000;border-bottom:1px solid #a0a0a0"></div>
<div class="a" style="left:6px;top:381px;width:73px;height:20px;background:#fff;border:1px solid #000;border-top:none;border-bottom:2px solid #000;border-right:2px solid #000"></div>
<div class="t" style="left:16px;top:384px;font-size:12px;color:#000">Символы</div>
<div class="t" style="left:89px;top:384px;font-size:12px;color:#7a7a7a">Тиковый график</div>
<div class="a" style="left:190px;top:385px;width:1px;height:13px;background:#888"></div>
<div class="a" style="left:3px;top:408px;width:296px;height:15px;background:linear-gradient(#cfdae8,#d6e0ec);"></div>
<div class="t" style="left:5px;top:409px;font-size:12px;color:#4a5668;transform:scaleX(.94);transform-origin:0 0">Навигатор</div>
<svg class="a" style="left:289px;top:412px" width="8" height="7" viewBox="0 0 8 7"><path d="M1 1l6 5M7 1L1 6" stroke="#000" stroke-width="1.8"/></svg>
<div class="a" style="left:3px;top:423px;width:297px;height:237px;background:#fff;border-left:1px solid #a9a9a9;border-top:1px solid #b8b8b8"></div>
<div class="a" style="left:17px;top:440px;width:1px;height:218px;background:repeating-linear-gradient(#a0a0a0 0 1px,transparent 1px 2px)"></div>
<div class="a" style="left:17px;top:452px;width:11px;height:1px;background:repeating-linear-gradient(90deg,#a0a0a0 0 1px,transparent 1px 2px)"></div>
<div class="a" style="left:17px;top:506px;width:11px;height:1px;background:repeating-linear-gradient(90deg,#a0a0a0 0 1px,transparent 1px 2px)"></div>
<div class="a" style="left:17px;top:524px;width:11px;height:1px;background:repeating-linear-gradient(90deg,#a0a0a0 0 1px,transparent 1px 2px)"></div>
<div class="a" style="left:38px;top:460px;width:1px;height:10px;background:repeating-linear-gradient(#a0a0a0 0 1px,transparent 1px 2px)"></div>
<div class="a" style="left:38px;top:470px;width:12px;height:1px;background:repeating-linear-gradient(90deg,#a0a0a0 0 1px,transparent 1px 2px)"></div>
<div class="a" style="left:59px;top:478px;width:1px;height:10px;background:repeating-linear-gradient(#a0a0a0 0 1px,transparent 1px 2px)"></div>
<div class="a" style="left:59px;top:488px;width:13px;height:1px;background:repeating-linear-gradient(90deg,#a0a0a0 0 1px,transparent 1px 2px)"></div>
<div class="a" style="left:38px;top:532px;width:1px;height:126px;background:repeating-linear-gradient(#a0a0a0 0 1px,transparent 1px 2px)"></div>
<div class="a" style="left:38px;top:542px;width:12px;height:1px;background:repeating-linear-gradient(90deg,#a0a0a0 0 1px,transparent 1px 2px)"></div>
<div class="a" style="left:38px;top:560px;width:12px;height:1px;background:repeating-linear-gradient(90deg,#a0a0a0 0 1px,transparent 1px 2px)"></div>
<div class="a" style="left:38px;top:578px;width:12px;height:1px;background:repeating-linear-gradient(90deg,#a0a0a0 0 1px,transparent 1px 2px)"></div>
<div class="a" style="left:38px;top:596px;width:12px;height:1px;background:repeating-linear-gradient(90deg,#a0a0a0 0 1px,transparent 1px 2px)"></div>
<div class="a" style="left:38px;top:614px;width:12px;height:1px;background:repeating-linear-gradient(90deg,#a0a0a0 0 1px,transparent 1px 2px)"></div>
<div class="a" style="left:38px;top:632px;width:12px;height:1px;background:repeating-linear-gradient(90deg,#a0a0a0 0 1px,transparent 1px 2px)"></div>
<div class="a" style="left:38px;top:650px;width:12px;height:1px;background:repeating-linear-gradient(90deg,#a0a0a0 0 1px,transparent 1px 2px)"></div>
<div class="a" style="left:13px;top:448px;width:9px;height:9px;border:1px solid #a8a8a8;background:linear-gradient(#fff,#e4e4e4)"></div><div class="a" style="left:15px;top:452px;width:5px;height:1px;background:#333"></div>
<div class="a" style="left:34px;top:466px;width:9px;height:9px;border:1px solid #a8a8a8;background:linear-gradient(#fff,#e4e4e4)"></div><div class="a" style="left:36px;top:470px;width:5px;height:1px;background:#333"></div>
<div class="a" style="left:13px;top:502px;width:9px;height:9px;border:1px solid #a8a8a8;background:linear-gradient(#fff,#e4e4e4)"></div><div class="a" style="left:15px;top:506px;width:5px;height:1px;background:#333"></div><div class="a" style="left:17px;top:504px;width:1px;height:5px;background:#333"></div>
<div class="a" style="left:13px;top:520px;width:9px;height:9px;border:1px solid #a8a8a8;background:linear-gradient(#fff,#e4e4e4)"></div><div class="a" style="left:15px;top:524px;width:5px;height:1px;background:#333"></div>
<svg class="a" style="left:10px;top:426px" width="15" height="15" viewBox="0 0 15 15"><rect x="0.5" y="0.5" width="10" height="8" fill="#e4eef8" stroke="#6a8ab0"/><rect x="4.5" y="5.5" width="10" height="9" fill="#f0f6fc" stroke="#6a8ab0"/><path d="M6 9l2 3 2-3M2 3h6" stroke="#5a7aa0" fill="none"/></svg>
<div class="t" style="left:31px;top:428px;font-size:12px;transform:scaleX(.915);transform-origin:0 0">Forex4you</div>
<svg class="a" style="left:28px;top:443px" width="18" height="17" viewBox="0 0 18 17"><circle cx="11" cy="5" r="3.5" fill="#f2c84a" stroke="#b0882a"/><path d="M5 16c0-6 2-8 6-8s6 2 6 8z" fill="#f2c84a" stroke="#b0882a"/><circle cx="6" cy="6" r="3" fill="#f8d860" stroke="#b0882a"/><path d="M1 15c0-5 2-6 5-6s4 1 4 6z" fill="#4ab84a" stroke="#2a8a2a"/></svg>
<div class="t" style="left:52px;top:446px;font-size:12px;transform:scaleX(.915);transform-origin:0 0">Счета</div>
<svg class="a" style="left:51px;top:461px" width="14" height="16" viewBox="0 0 14 16"><rect x="2" y="0.5" width="10" height="15" fill="#5aa8e8" stroke="#2a6aa8"/><rect x="0.5" y="2.5" width="4" height="13" fill="#2a78c8"/><path d="M6 4h4M6 7h4" stroke="#dff"/></svg>
<div class="t" style="left:73px;top:464px;font-size:12px;transform:scaleX(.915);transform-origin:0 0">EGlobal-Cent4</div>
<svg class="a" style="left:74px;top:479px" width="12" height="16" viewBox="0 0 12 16"><circle cx="6" cy="4" r="3.5" fill="#f2c84a" stroke="#b0882a"/><path d="M1 15c0-6 2-8 5-8s5 2 5 8z" fill="#f2c84a" stroke="#b0882a"/></svg>
<div class="t" style="left:93px;top:482px;font-size:12px;transform:scaleX(.915);transform-origin:0 0">3248262: Ibatullin Marat</div>
<svg class="a" style="left:29px;top:497px" width="16" height="16" viewBox="0 0 16 16"><rect x="0.5" y="0.5" width="15" height="15" rx="2" fill="#f8e070" stroke="#c0a030"/><path d="M10 3c-3 0-3 2-3.5 5L6 13c-.5 1.5-2 1.5-2.5 1M5 7h5" stroke="#8a6a10" stroke-width="1.3" fill="none"/></svg>
<div class="t" style="left:52px;top:500px;font-size:12px;transform:scaleX(.915);transform-origin:0 0">Индикаторы</div>
<svg class="a" style="left:29px;top:515px" width="17" height="16" viewBox="0 0 17 16"><path d="M4 9l4-1 6 4-2.5 3z" fill="#f2c440" stroke="#9a7a20" stroke-width=".8"/><path d="M5 8.5c1 2 3 2.5 5 2" stroke="#e8e0a0" fill="none"/><ellipse cx="8.5" cy="6.5" rx="8" ry="2.6" fill="#4aa0e0" stroke="#2a6aa8" stroke-width=".8"/><path d="M4 6.5c0-3 2-5 4.5-5s4.5 2 4.5 5z" fill="#58b0ec" stroke="#2a6aa8" stroke-width=".8"/><ellipse cx="8" cy="3.5" rx="2.5" ry="1.3" fill="#bfe4fa"/></svg>
<div class="t" style="left:52px;top:518px;font-size:12px;transform:scaleX(.915);transform-origin:0 0">Советники</div>
<svg class="a" style="left:51px;top:533px" width="17" height="16" viewBox="0 0 17 16"><path d="M4 9l4-1 6 4-2.5 3z" fill="#f2c440" stroke="#9a7a20" stroke-width=".8"/><path d="M5 8.5c1 2 3 2.5 5 2" stroke="#e8e0a0" fill="none"/><ellipse cx="8.5" cy="6.5" rx="8" ry="2.6" fill="#4aa0e0" stroke="#2a6aa8" stroke-width=".8"/><path d="M4 6.5c0-3 2-5 4.5-5s4.5 2 4.5 5z" fill="#58b0ec" stroke="#2a6aa8" stroke-width=".8"/><ellipse cx="8" cy="3.5" rx="2.5" ry="1.3" fill="#bfe4fa"/></svg>
<div class="t" style="left:73px;top:536px;font-size:12px;transform:scaleX(.915);transform-origin:0 0">BasketBull_v11.451_КВАРТЕТ</div>
<svg class="a" style="left:51px;top:551px" width="17" height="16" viewBox="0 0 17 16"><path d="M4 9l4-1 6 4-2.5 3z" fill="#f2c440" stroke="#9a7a20" stroke-width=".8"/><path d="M5 8.5c1 2 3 2.5 5 2" stroke="#e8e0a0" fill="none"/><ellipse cx="8.5" cy="6.5" rx="8" ry="2.6" fill="#4aa0e0" stroke="#2a6aa8" stroke-width=".8"/><path d="M4 6.5c0-3 2-5 4.5-5s4.5 2 4.5 5z" fill="#58b0ec" stroke="#2a6aa8" stroke-width=".8"/><ellipse cx="8" cy="3.5" rx="2.5" ry="1.3" fill="#bfe4fa"/></svg>
<div class="t" style="left:73px;top:554px;font-size:12px;transform:scaleX(.915);transform-origin:0 0">BasketBull_v11.45КВАРТЕТ</div>
<svg class="a" style="left:51px;top:569px" width="17" height="16" viewBox="0 0 17 16"><path d="M4 9l4-1 6 4-2.5 3z" fill="#f2c440" stroke="#9a7a20" stroke-width=".8"/><path d="M5 8.5c1 2 3 2.5 5 2" stroke="#e8e0a0" fill="none"/><ellipse cx="8.5" cy="6.5" rx="8" ry="2.6" fill="#4aa0e0" stroke="#2a6aa8" stroke-width=".8"/><path d="M4 6.5c0-3 2-5 4.5-5s4.5 2 4.5 5z" fill="#58b0ec" stroke="#2a6aa8" stroke-width=".8"/><ellipse cx="8" cy="3.5" rx="2.5" ry="1.3" fill="#bfe4fa"/></svg>
<div class="t" style="left:73px;top:572px;font-size:12px;transform:scaleX(.915);transform-origin:0 0">Ilan1.6Dynamic_e-Trall_CDD</div>
<svg class="a" style="left:51px;top:587px" width="17" height="16" viewBox="0 0 17 16"><path d="M4 9l4-1 6 4-2.5 3z" fill="#f2c440" stroke="#9a7a20" stroke-width=".8"/><path d="M5 8.5c1 2 3 2.5 5 2" stroke="#e8e0a0" fill="none"/><ellipse cx="8.5" cy="6.5" rx="8" ry="2.6" fill="#4aa0e0" stroke="#2a6aa8" stroke-width=".8"/><path d="M4 6.5c0-3 2-5 4.5-5s4.5 2 4.5 5z" fill="#58b0ec" stroke="#2a6aa8" stroke-width=".8"/><ellipse cx="8" cy="3.5" rx="2.5" ry="1.3" fill="#bfe4fa"/></svg>
<div class="t" style="left:73px;top:590px;font-size:12px;transform:scaleX(.915);transform-origin:0 0">MACD Sample</div>
<svg class="a" style="left:51px;top:605px" width="17" height="16" viewBox="0 0 17 16"><path d="M4 9l4-1 6 4-2.5 3z" fill="#f2c440" stroke="#9a7a20" stroke-width=".8"/><path d="M5 8.5c1 2 3 2.5 5 2" stroke="#e8e0a0" fill="none"/><ellipse cx="8.5" cy="6.5" rx="8" ry="2.6" fill="#4aa0e0" stroke="#2a6aa8" stroke-width=".8"/><path d="M4 6.5c0-3 2-5 4.5-5s4.5 2 4.5 5z" fill="#58b0ec" stroke="#2a6aa8" stroke-width=".8"/><ellipse cx="8" cy="3.5" rx="2.5" ry="1.3" fill="#bfe4fa"/></svg>
<div class="t" style="left:73px;top:608px;font-size:12px;transform:scaleX(.915);transform-origin:0 0">Moving Average</div>
<svg class="a" style="left:51px;top:623px" width="17" height="16" viewBox="0 0 17 16"><path d="M4 9l4-1 6 4-2.5 3z" fill="#f2c440" stroke="#9a7a20" stroke-width=".8"/><path d="M5 8.5c1 2 3 2.5 5 2" stroke="#e8e0a0" fill="none"/><ellipse cx="8.5" cy="6.5" rx="8" ry="2.6" fill="#4aa0e0" stroke="#2a6aa8" stroke-width=".8"/><path d="M4 6.5c0-3 2-5 4.5-5s4.5 2 4.5 5z" fill="#58b0ec" stroke="#2a6aa8" stroke-width=".8"/><ellipse cx="8" cy="3.5" rx="2.5" ry="1.3" fill="#bfe4fa"/></svg>
<div class="t" style="left:73px;top:626px;font-size:12px;transform:scaleX(.915);transform-origin:0 0">Razrulivatel 27,04,13_edu</div>
<svg class="a" style="left:51px;top:641px" width="17" height="16" viewBox="0 0 17 16"><path d="M4 9l4-1 6 4-2.5 3z" fill="#f2c440" stroke="#9a7a20" stroke-width=".8"/><path d="M5 8.5c1 2 3 2.5 5 2" stroke="#e8e0a0" fill="none"/><ellipse cx="8.5" cy="6.5" rx="8" ry="2.6" fill="#4aa0e0" stroke="#2a6aa8" stroke-width=".8"/><path d="M4 6.5c0-3 2-5 4.5-5s4.5 2 4.5 5z" fill="#58b0ec" stroke="#2a6aa8" stroke-width=".8"/><ellipse cx="8" cy="3.5" rx="2.5" ry="1.3" fill="#bfe4fa"/></svg>
<div class="t" style="left:73px;top:644px;font-size:12px;transform:scaleX(.915);transform-origin:0 0">trailingmaster</div>
<div class="a" style="left:282px;top:423px;width:17px;height:237px;background:#f0f0f0;border-left:1px solid #e8e8e8"></div>
<svg class="a" style="left:286px;top:431px" width="8" height="5" viewBox="0 0 8 5"><path d="M0 5L4 0.5 8 5Z" fill="#3a3a3a"/></svg>
<svg class="a" style="left:286px;top:650px" width="8" height="5" viewBox="0 0 8 5"><path d="M0 0L4 4.5 8 0Z" fill="#3a3a3a"/></svg>
<div class="a" style="left:283px;top:443px;width:14px;height:172px;border:1px solid #a8a8a8;border-radius:2px;background:linear-gradient(90deg,#f2f2f2,#e0e0e0 50%,#d0d0d0)"></div>
<svg class="a" style="left:286px;top:526px" width="8" height="6" viewBox="0 0 8 6"><path d="M0 0.5h8M0 2.5h8M0 4.5h8" stroke="#666"/></svg>
<div class="a" style="left:0px;top:660px;width:300px;height:26px;background:#f0f0f0;border-top:1px solid #000;border-bottom:1px solid #a0a0a0"></div>
<div class="a" style="left:6px;top:660px;width:61px;height:20px;background:#fff;border:1px solid #000;border-top:none;border-bottom:2px solid #000;border-right:2px solid #000"></div>
<div class="t" style="left:16px;top:663px;font-size:12px;color:#000;transform:scaleX(.93);transform-origin:0 0">Общие</div>
<div class="t" style="left:76px;top:663px;font-size:12px;color:#7a7a7a;transform:scaleX(.93);transform-origin:0 0">Избранное</div>
<div class="a" style="left:147px;top:664px;width:1px;height:13px;background:#888"></div>
<div class="a" style="left:301px;top:660px;width:1px;height:26px;background:#a8a8a8"></div>
<div class="a" style="left:300px;top:70px;width:980px;height:596px;background:#f0f0f0"></div>
<div class="a" style="left:303px;top:71px;width:975px;height:593px;background:#000"></div>
<div class="a" style="left:306px;top:73px;width:930px;height:571px;border:1px solid #fff;border-left:1px solid #fff"></div>
<svg class="a" style="left:310px;top:80px" width="7" height="4" viewBox="0 0 7 4"><path d="M0 0h7L3.5 4z" fill="#fff"/></svg>
<div class="t" style="left:322px;top:76px;font-size:10px;color:#fff;transform:scaleX(.95);transform-origin:0 0">CHFJPY,M1</div>
<div class="t" style="left:311px;top:89.5px;font-size:10px;color:#fff;transform:scaleX(.937);transform-origin:0 0">Процент прибыли относительно баланса на начало квартала</div>
<div class="a" style="left:1236px;top:102px;width:4px;height:1px;background:#fff"></div>
<div class="t" style="left:1241px;top:97px;font-size:9px;color:#f4f4f4;letter-spacing:.1px">113.855</div>
<div class="a" style="left:1236px;top:135px;width:4px;height:1px;background:#fff"></div>
<div class="t" style="left:1241px;top:130px;font-size:9px;color:#f4f4f4;letter-spacing:.1px">113.825</div>
<div class="a" style="left:1236px;top:169px;width:4px;height:1px;background:#fff"></div>
<div class="t" style="left:1241px;top:164px;font-size:9px;color:#f4f4f4;letter-spacing:.1px">113.795</div>
<div class="a" style="left:1236px;top:202px;width:4px;height:1px;background:#fff"></div>
<div class="t" style="left:1241px;top:197px;font-size:9px;color:#f4f4f4;letter-spacing:.1px">113.765</div>
<div class="a" style="left:1236px;top:236px;width:4px;height:1px;background:#fff"></div>
<div class="t" style="left:1241px;top:231px;font-size:9px;color:#f4f4f4;letter-spacing:.1px">113.735</div>
<div class="a" style="left:1236px;top:269px;width:4px;height:1px;background:#fff"></div>
<div class="t" style="left:1241px;top:264px;font-size:9px;color:#f4f4f4;letter-spacing:.1px">113.705</div>
<div class="a" style="left:1236px;top:303px;width:4px;height:1px;background:#fff"></div>
<div class="t" style="left:1241px;top:298px;font-size:9px;color:#f4f4f4;letter-spacing:.1px">113.675</div>
<div class="a" style="left:1236px;top:336px;width:4px;height:1px;background:#fff"></div>
<div class="t" style="left:1241px;top:331px;font-size:9px;color:#f4f4f4;letter-spacing:.1px">113.645</div>
<div class="a" style="left:1236px;top:370px;width:4px;height:1px;background:#fff"></div>
<div class="t" style="left:1241px;top:365px;font-size:9px;color:#f4f4f4;letter-spacing:.1px">113.615</div>
<div class="a" style="left:1236px;top:403px;width:4px;height:1px;background:#fff"></div>
<div class="t" style="left:1241px;top:398px;font-size:9px;color:#f4f4f4;letter-spacing:.1px">113.585</div>
<div class="a" style="left:1236px;top:436px;width:4px;height:1px;background:#fff"></div>
<div class="t" style="left:1241px;top:431px;font-size:9px;color:#f4f4f4;letter-spacing:.1px">113.555</div>
<div class="a" style="left:1236px;top:470px;width:4px;height:1px;background:#fff"></div>
<div class="t" style="left:1241px;top:465px;font-size:9px;color:#f4f4f4;letter-spacing:.1px">113.525</div>
<div class="a" style="left:1236px;top:503px;width:4px;height:1px;background:#fff"></div>
<div class="t" style="left:1241px;top:498px;font-size:9px;color:#f4f4f4;letter-spacing:.1px">113.495</div>
<div class="a" style="left:1236px;top:537px;width:4px;height:1px;background:#fff"></div>
<div class="t" style="left:1241px;top:532px;font-size:9px;color:#f4f4f4;letter-spacing:.1px">113.465</div>
<div class="a" style="left:1236px;top:570px;width:4px;height:1px;background:#fff"></div>
<div class="t" style="left:1241px;top:565px;font-size:9px;color:#f4f4f4;letter-spacing:.1px">113.435</div>
<div class="a" style="left:1236px;top:604px;width:4px;height:1px;background:#fff"></div>
<div class="t" style="left:1241px;top:599px;font-size:9px;color:#f4f4f4;letter-spacing:.1px">113.405</div>
<div class="a" style="left:1236px;top:637px;width:4px;height:1px;background:#fff"></div>
<div class="t" style="left:1241px;top:632px;font-size:9px;color:#f4f4f4;letter-spacing:.1px">113.375</div>
<div class="a" style="left:307px;top:644px;width:1px;height:4px;background:#fff"></div>
<div class="t" style="left:306px;top:647.5px;font-size:9px;color:#f4f4f4">11 Jan 2017</div>
<div class="a" style="left:371px;top:644px;width:1px;height:4px;background:#fff"></div>
<div class="t" style="left:370px;top:647.5px;font-size:9px;color:#f4f4f4">11 Jan 21:38</div>
<div class="a" style="left:435px;top:644px;width:1px;height:4px;background:#fff"></div>
<div class="t" style="left:434px;top:647.5px;font-size:9px;color:#f4f4f4">11 Jan 21:54</div>
<div class="a" style="left:499px;top:644px;width:1px;height:4px;background:#fff"></div>
<div class="t" style="left:498px;top:647.5px;font-size:9px;color:#f4f4f4">11 Jan 22:10</div>
<div class="a" style="left:563px;top:644px;width:1px;height:4px;background:#fff"></div>
<div class="t" style="left:562px;top:647.5px;font-size:9px;color:#f4f4f4">11 Jan 22:26</div>
<div class="a" style="left:627px;top:644px;width:1px;height:4px;background:#fff"></div>
<div class="t" style="left:626px;top:647.5px;font-size:9px;color:#f4f4f4">11 Jan 22:42</div>
<div class="a" style="left:691px;top:644px;width:1px;height:4px;background:#fff"></div>
<div class="t" style="left:690px;top:647.5px;font-size:9px;color:#f4f4f4">11 Jan 22:58</div>
<div class="a" style="left:755px;top:644px;width:1px;height:4px;background:#fff"></div>
<div class="t" style="left:754px;top:647.5px;font-size:9px;color:#f4f4f4">11 Jan 23:14</div>
<div class="a" style="left:819px;top:644px;width:1px;height:4px;background:#fff"></div>
<div class="t" style="left:818px;top:647.5px;font-size:9px;color:#f4f4f4">11 Jan 23:30</div>
<div class="a" style="left:883px;top:644px;width:1px;height:4px;background:#fff"></div>
<div class="t" style="left:882px;top:647.5px;font-size:9px;color:#f4f4f4">11 Jan 23:46</div>
<div class="a" style="left:947px;top:644px;width:1px;height:4px;background:#fff"></div>
<div class="t" style="left:946px;top:647.5px;font-size:9px;color:#f4f4f4">12 Jan 00:02</div>
<div class="a" style="left:1011px;top:644px;width:1px;height:4px;background:#fff"></div>
<div class="t" style="left:1010px;top:647.5px;font-size:9px;color:#f4f4f4">12 Jan 00:18</div>
<div class="a" style="left:1075px;top:644px;width:1px;height:4px;background:#fff"></div>
<div class="t" style="left:1074px;top:647.5px;font-size:9px;color:#f4f4f4">12 Jan 00:34</div>
<div class="a" style="left:1139px;top:644px;width:1px;height:4px;background:#fff"></div>
<div class="t" style="left:1138px;top:647.5px;font-size:9px;color:#f4f4f4">12 Jan 00:50</div>
<div class="a" style="left:1203px;top:644px;width:1px;height:4px;background:#fff"></div>
<div class="t" style="left:1202px;top:647.5px;font-size:9px;color:#f4f4f4">12 Jan 01:06</div>
<div class="t" style="left:335px;top:375px;font-size:12px;letter-spacing:.2px;color:#f5d08a">Прибыль</div>
<div class="t" style="left:657px;top:375px;font-size:12px;letter-spacing:.2px;color:#f0d070">в пунктах</div>
<div class="t" style="left:772px;top:375px;font-size:12px;letter-spacing:.2px;color:#f0d070">в валюте</div>
<div class="t" style="left:310px;top:387px;font-size:12px;letter-spacing:.2px;color:#ece080">Текущая прибыль</div>
<div class="t" style="left:672px;top:387px;font-size:12px;letter-spacing:.2px;color:#f0a858">-5646</div>
<div class="t" style="left:737px;top:387px;font-size:12px;letter-spacing:.2px;color:#f0a858">-56.95</div>
<div class="t" style="left:812px;top:387px;font-size:12px;letter-spacing:.2px;color:#f0a858">-1.91 %</div>
<div class="t" style="left:310px;top:399px;font-size:12px;letter-spacing:.2px;color:#ece080">Прибыль за сегодня</div>
<div class="t" style="left:672px;top:399px;font-size:12px;letter-spacing:.2px;color:#a0a068">2552</div>
<div class="t" style="left:737px;top:399px;font-size:12px;letter-spacing:.2px;color:#a0a068">56.93</div>
<div class="t" style="left:813px;top:399px;font-size:12px;letter-spacing:.2px;color:#a0a068">1.91 %</div>
<div class="t" style="left:310px;top:411px;font-size:12px;letter-spacing:.2px;color:#ece080">Прибыль за 2017.01.11</div>
<div class="t" style="left:672px;top:411px;font-size:12px;letter-spacing:.2px;color:#a0a068">2391</div>
<div class="t" style="left:737px;top:411px;font-size:12px;letter-spacing:.2px;color:#a0a068">39.76</div>
<div class="t" style="left:813px;top:411px;font-size:12px;letter-spacing:.2px;color:#a0a068">1.34 %</div>
<div class="t" style="left:310px;top:423px;font-size:12px;letter-spacing:.2px;color:#ece080">Прибыль за 2017.01.10</div>
<div class="t" style="left:672px;top:423px;font-size:12px;letter-spacing:.2px;color:#a0a068">1883</div>
<div class="t" style="left:737px;top:423px;font-size:12px;letter-spacing:.2px;color:#a0a068">37.14</div>
<div class="t" style="left:813px;top:423px;font-size:12px;letter-spacing:.2px;color:#a0a068">1.25 %</div>
<div class="t" style="left:310px;top:435px;font-size:12px;letter-spacing:.2px;color:#ece080">Прибыль за 2017.01.09</div>
<div class="t" style="left:672px;top:435px;font-size:12px;letter-spacing:.2px;color:#a0a068">1649</div>
<div class="t" style="left:737px;top:435px;font-size:12px;letter-spacing:.2px;color:#a0a068">57.63</div>
<div class="t" style="left:813px;top:435px;font-size:12px;letter-spacing:.2px;color:#a0a068">1.94 %</div>
<div class="t" style="left:310px;top:447px;font-size:12px;letter-spacing:.2px;color:#ece080">Прибыль за 2017.01.06</div>
<div class="t" style="left:672px;top:447px;font-size:12px;letter-spacing:.2px;color:#a0a068">1295</div>
<div class="t" style="left:737px;top:447px;font-size:12px;letter-spacing:.2px;color:#a0a068">22.15</div>
<div class="t" style="left:813px;top:447px;font-size:12px;letter-spacing:.2px;color:#a0a068">0.74 %</div>
<div class="t" style="left:310px;top:459px;font-size:12px;letter-spacing:.2px;color:#ece080">Прибыль за неделю</div>
<div class="t" style="left:672px;top:459px;font-size:12px;letter-spacing:.2px;color:#a0a068">8475</div>
<div class="t" style="left:737px;top:459px;font-size:12px;letter-spacing:.2px;color:#a0a068">191.46</div>
<div class="t" style="left:813px;top:459px;font-size:12px;letter-spacing:.2px;color:#a0a068">6.43 %</div>
<div class="t" style="left:310px;top:471px;font-size:12px;letter-spacing:.2px;color:#ece080">Прибыль за месяц</div>
<div class="t" style="left:672px;top:471px;font-size:12px;letter-spacing:.2px;color:#f0a858">-27448</div>
<div class="t" style="left:737px;top:471px;font-size:12px;letter-spacing:.2px;color:#a0a068">274.57</div>
<div class="t" style="left:813px;top:471px;font-size:12px;letter-spacing:.2px;color:#a0a068">9.22 %</div>
<div class="t" style="left:310px;top:483px;font-size:12px;letter-spacing:.2px;color:#ece080">Прибыль за квартал</div>
<div class="t" style="left:672px;top:483px;font-size:12px;letter-spacing:.2px;color:#f0a858">-27448</div>
<div class="t" style="left:737px;top:483px;font-size:12px;letter-spacing:.2px;color:#a0a068">274.57</div>
<div class="t" style="left:813px;top:483px;font-size:12px;letter-spacing:.2px;color:#a0a068">9.22 %</div>
<div class="t" style="left:310px;top:495px;font-size:12px;letter-spacing:.2px;color:#ece080">Прибыль за год</div>
<div class="t" style="left:672px;top:495px;font-size:12px;letter-spacing:.2px;color:#f0a858">-27448</div>
<div class="t" style="left:737px;top:495px;font-size:12px;letter-spacing:.2px;color:#a0a068">274.57</div>
<div class="t" style="left:813px;top:495px;font-size:12px;letter-spacing:.2px;color:#a0a068">9.22 %</div>
<div class="a" style="left:300px;top:664px;width:980px;height:2px;background:#fff"></div>
<div class="a" style="left:303px;top:666px;width:977px;height:1px;background:#000"></div>
<div class="a" style="left:303px;top:667px;width:977px;height:23px;background:#f0f0f0;border-bottom:1px solid #a0a0a0"></div>
<div class="a" style="left:303px;top:667px;width:85px;height:18px;background:#e6e6e6;border-left:1px solid #fff"></div>
<div class="t" style="left:320px;top:669px;font-size:12px;color:#707070;transform:scaleX(.9);transform-origin:0 0">GBPJPY,H1</div>
<div class="a" style="left:387px;top:666px;width:85px;height:20px;background:#fff;border:1px solid #000;border-top:none;border-bottom:2px solid #000;border-right:2px solid #000"></div>
<div class="t" style="left:400px;top:669px;font-size:12px;color:#000;transform:scaleX(.9);transform-origin:0 0">CHFJPY,M1</div>
<svg class="a" style="left:1247px;top:672px" width="5" height="8" viewBox="0 0 5 8"><path d="M5 0v8L0 4z" fill="#a0a0a0"/></svg>
<svg class="a" style="left:1265px;top:672px" width="5" height="8" viewBox="0 0 5 8"><path d="M0 0v8l5-4z" fill="#a0a0a0"/></svg>
<div class="a" style="left:0px;top:686px;width:15px;height:274px;background:#f0f0f0"></div>
<svg class="a" style="left:3px;top:692px" width="8" height="7" viewBox="0 0 8 7"><path d="M1 1l6 5M7 1L1 6" stroke="#000" stroke-width="1.8"/></svg>
<div class="a" style="left:1px;top:704px;width:14px;height:255px;background:linear-gradient(90deg,#c8daee,#a9c4e2 30%,#a6c0de)"></div>
<div class="t" style="left:-18px;top:925px;width:52px;height:14px;transform:rotate(-90deg) scaleX(.85);font-size:11.5px;color:#1e2a4a;text-align:left;line-height:14px">Терминал</div>
<div class="a" style="left:15px;top:690px;width:1265px;height:245px;background:#fff;border-top:1px solid #a0a0a0;border-left:1px solid #a0a0a0"></div>
<div class="a" style="left:16px;top:691px;width:1243px;height:25px;background:linear-gradient(#fff 0,#fff 50%,#f3f4f6 50%,#eef0f2);border-bottom:1px solid #c4c4c4"></div>
<div class="a" style="left:100px;top:691px;width:1px;height:24px;background:#e0e0e0"></div>
<div class="a" style="left:248px;top:691px;width:1px;height:24px;background:#e0e0e0"></div>
<div class="a" style="left:313px;top:691px;width:1px;height:24px;background:#e0e0e0"></div>
<div class="a" style="left:367px;top:691px;width:1px;height:24px;background:#e0e0e0"></div>
<div class="a" style="left:432px;top:691px;width:1px;height:24px;background:#e0e0e0"></div>
<div class="a" style="left:498px;top:691px;width:1px;height:24px;background:#e0e0e0"></div>
<div class="a" style="left:565px;top:691px;width:1px;height:24px;background:#e0e0e0"></div>
<div class="a" style="left:631px;top:691px;width:1px;height:24px;background:#e0e0e0"></div>
<div class="a" style="left:778px;top:691px;width:1px;height:24px;background:#e0e0e0"></div>
<div class="a" style="left:844px;top:691px;width:1px;height:24px;background:#e0e0e0"></div>
<div class="a" style="left:910px;top:691px;width:1px;height:24px;background:#e0e0e0"></div>
<div class="a" style="left:977px;top:691px;width:1px;height:24px;background:#e0e0e0"></div>
<div class="a" style="left:1048px;top:691px;width:1px;height:24px;background:#e0e0e0"></div>
<div class="t" style="left:22px;top:696px;font-size:12px;transform:scaleX(.95);transform-origin:0 0">Ордер</div>
<div class="t" style="left:123px;top:696px;font-size:12px;transform:scaleX(.95);width:120px;text-align:right;transform-origin:100% 0">Время</div>
<div class="t" style="left:189px;top:696px;font-size:12px;transform:scaleX(.95);width:120px;text-align:right;transform-origin:100% 0">Тип</div>
<div class="t" style="left:242px;top:696px;font-size:12px;transform:scaleX(.95);width:120px;text-align:right;transform-origin:100% 0">Объем</div>
<div class="t" style="left:308px;top:696px;font-size:12px;transform:scaleX(.95);width:120px;text-align:right;transform-origin:100% 0">Символ</div>
<div class="t" style="left:373px;top:696px;font-size:12px;transform:scaleX(.95);width:120px;text-align:right;transform-origin:100% 0">Цена</div>
<div class="t" style="left:440px;top:696px;font-size:12px;transform:scaleX(.95);width:120px;text-align:right;transform-origin:100% 0">S / L</div>
<div class="t" style="left:506px;top:696px;font-size:12px;transform:scaleX(.95);width:120px;text-align:right;transform-origin:100% 0">T / P</div>
<div class="t" style="left:632px;top:696px;font-size:12px;transform:scaleX(.95);width:120px;text-align:right;transform-origin:100% 0">Время</div>
<div class="t" style="left:719px;top:696px;font-size:12px;transform:scaleX(.95);width:120px;text-align:right;transform-origin:100% 0">Цена</div>
<div class="t" style="left:853px;top:696px;font-size:12px;transform:scaleX(.95);transform-origin:0 0">Комисс...</div>
<div class="t" style="left:851px;top:696px;font-size:12px;transform:scaleX(.95);width:120px;text-align:right;transform-origin:100% 0">Своп</div>
<div class="t" style="left:924px;top:696px;font-size:12px;transform:scaleX(.95);width:120px;text-align:right;transform-origin:100% 0">Прибыль</div>
<div class="t" style="left:1133px;top:696px;font-size:12px;transform:scaleX(.95);width:120px;text-align:right;transform-origin:100% 0">Комментарий</div>
<div class="t" style="left:764px;top:698px;font-size:10px;color:#666">/</div>
<div class="a" style="left:16px;top:716px;width:1243px;height:20px;background:#ffffff;border-bottom:1px solid #cdcdcd"></div>
<div class="a" style="left:566px;top:716px;width:64px;height:19px;background:#5ff05f"></div>
<div class="a" style="left:100px;top:716px;width:1px;height:20px;background:#c8c8c8"></div>
<div class="a" style="left:248px;top:716px;width:1px;height:20px;background:#c8c8c8"></div>
<div class="a" style="left:313px;top:716px;width:1px;height:20px;background:#c8c8c8"></div>
<div class="a" style="left:367px;top:716px;width:1px;height:20px;background:#c8c8c8"></div>
<div class="a" style="left:432px;top:716px;width:1px;height:20px;background:#c8c8c8"></div>
<div class="a" style="left:498px;top:716px;width:1px;height:20px;background:#c8c8c8"></div>
<div class="a" style="left:565px;top:716px;width:1px;height:20px;background:#c8c8c8"></div>
<div class="a" style="left:631px;top:716px;width:1px;height:20px;background:#c8c8c8"></div>
<div class="a" style="left:778px;top:716px;width:1px;height:20px;background:#c8c8c8"></div>
<div class="a" style="left:844px;top:716px;width:1px;height:20px;background:#c8c8c8"></div>
<div class="a" style="left:910px;top:716px;width:1px;height:20px;background:#c8c8c8"></div>
<div class="a" style="left:977px;top:716px;width:1px;height:20px;background:#c8c8c8"></div>
<div class="a" style="left:1048px;top:716px;width:1px;height:20px;background:#c8c8c8"></div>
<svg class="a" style="left:19px;top:718px" width="14" height="16" viewBox="0 0 14 16"><path d="M1.5 1.5h6l3 3v9h-9z" fill="#f8fbff" stroke="#555"/><path d="M7.5 1.5v3h3" fill="none" stroke="#555"/><circle cx="9.5" cy="12" r="3.3" fill="#e8501e" stroke="#a83010" stroke-width=".8"/></svg>
<div class="t" style="left:38px;top:718px;font-size:12px;transform:scaleX(.91);transform-origin:0 0">138121029</div>
<div class="t" style="left:94px;top:718px;font-size:12px;transform:scaleX(.91);width:150px;text-align:right;transform-origin:100% 0">2016.12.12 17:40:09</div>
<div class="t" style="left:160px;top:718px;font-size:12px;transform:scaleX(.91);width:150px;text-align:right;transform-origin:100% 0">sell</div>
<div class="t" style="left:213px;top:718px;font-size:12px;transform:scaleX(.91);width:150px;text-align:right;transform-origin:100% 0">0.01</div>
<div class="t" style="left:279px;top:718px;font-size:12px;transform:scaleX(.91);width:150px;text-align:right;transform-origin:100% 0">chfjpy</div>
<div class="t" style="left:345px;top:718px;font-size:12px;transform:scaleX(.91);width:150px;text-align:right;transform-origin:100% 0">113.685</div>
<div class="t" style="left:411px;top:718px;font-size:12px;transform:scaleX(.91);width:150px;text-align:right;transform-origin:100% 0">0.000</div>
<div class="t" style="left:477px;top:718px;font-size:12px;transform:scaleX(.91);width:150px;text-align:right;transform-origin:100% 0">113.089</div>
<div class="t" style="left:624px;top:718px;font-size:12px;transform:scaleX(.91);width:150px;text-align:right;transform-origin:100% 0">2017.01.11 19:11:05</div>
<div class="t" style="left:691px;top:718px;font-size:12px;transform:scaleX(.91);width:150px;text-align:right;transform-origin:100% 0">113.084</div>
<div class="t" style="left:756px;top:718px;font-size:12px;transform:scaleX(.91);width:150px;text-align:right;transform-origin:100% 0">-0.10</div>
<div class="t" style="left:822px;top:718px;font-size:12px;transform:scaleX(.91);width:150px;text-align:right;transform-origin:100% 0">0.30</div>
<div class="t" style="left:895px;top:718px;font-size:12px;transform:scaleX(.91);width:150px;text-align:right;transform-origin:100% 0">5.26</div>
<div class="t" style="left:1104px;top:718px;font-size:12px;letter-spacing:.4px;width:150px;text-align:right;transform:scaleX(.95);transform-origin:100% 0">bbs+++1[tp]</div>
<div class="a" style="left:16px;top:736px;width:1243px;height:20px;background:#ebebeb;border-bottom:1px solid #cdcdcd"></div>
<div class="a" style="left:100px;top:736px;width:1px;height:20px;background:#c8c8c8"></div>
<div class="a" style="left:248px;top:736px;width:1px;height:20px;background:#c8c8c8"></div>
<div class="a" style="left:313px;top:736px;width:1px;height:20px;background:#c8c8c8"></div>
<div class="a" style="left:367px;top:736px;width:1px;height:20px;background:#c8c8c8"></div>
<div class="a" style="left:432px;top:736px;width:1px;height:20px;background:#c8c8c8"></div>
<div class="a" style="left:498px;top:736px;width:1px;height:20px;background:#c8c8c8"></div>
<div class="a" style="left:565px;top:736px;width:1px;height:20px;background:#c8c8c8"></div>
<div class="a" style="left:631px;top:736px;width:1px;height:20px;background:#c8c8c8"></div>
<div class="a" style="left:778px;top:736px;width:1px;height:20px;background:#c8c8c8"></div>
<div class="a" style="left:844px;top:736px;width:1px;height:20px;background:#c8c8c8"></div>
<div class="a" style="left:910px;top:736px;width:1px;height:20px;background:#c8c8c8"></div>
<div class="a" style="left:977px;top:736px;width:1px;height:20px;background:#c8c8c8"></div>
<div class="a" style="left:1048px;top:736px;width:1px;height:20px;background:#c8c8c8"></div>
<svg class="a" style="left:19px;top:738px" width="14" height="16" viewBox="0 0 14 16"><path d="M1.5 1.5h6l3 3v9h-9z" fill="#f8fbff" stroke="#555"/><path d="M7.5 1.5v3h3" fill="none" stroke="#555"/><circle cx="9.5" cy="12" r="3.3" fill="#e8501e" stroke="#a83010" stroke-width=".8"/></svg>
<div class="t" style="left:38px;top:738px;font-size:12px;transform:scaleX(.91);transform-origin:0 0">140178830</div>
<div class="t" style="left:94px;top:738px;font-size:12px;transform:scaleX(.91);width:150px;text-align:right;transform-origin:100% 0">2017.01.02 14:25:08</div>
<div class="t" style="left:160px;top:738px;font-size:12px;transform:scaleX(.91);width:150px;text-align:right;transform-origin:100% 0">sell</div>
<div class="t" style="left:213px;top:738px;font-size:12px;transform:scaleX(.91);width:150px;text-align:right;transform-origin:100% 0">0.06</div>
<div class="t" style="left:279px;top:738px;font-size:12px;transform:scaleX(.91);width:150px;text-align:right;transform-origin:100% 0">cadjpy</div>
<div class="t" style="left:345px;top:738px;font-size:12px;transform:scaleX(.91);width:150px;text-align:right;transform-origin:100% 0">87.197</div>
<div class="t" style="left:411px;top:738px;font-size:12px;transform:scaleX(.91);width:150px;text-align:right;transform-origin:100% 0">0.000</div>
<div class="t" style="left:477px;top:738px;font-size:12px;transform:scaleX(.91);width:150px;text-align:right;transform-origin:100% 0">86.981</div>
<div class="t" style="left:624px;top:738px;font-size:12px;transform:scaleX(.91);width:150px;text-align:right;transform-origin:100% 0">2017.01.11 19:12:07</div>
<div class="t" style="left:691px;top:738px;font-size:12px;transform:scaleX(.91);width:150px;text-align:right;transform-origin:100% 0">87.201</div>
<div class="t" style="left:756px;top:738px;font-size:12px;transform:scaleX(.91);width:150px;text-align:right;transform-origin:100% 0">-0.60</div>
<div class="t" style="left:822px;top:738px;font-size:12px;transform:scaleX(.91);width:150px;text-align:right;transform-origin:100% 0">-1.80</div>
<div class="t" style="left:895px;top:738px;font-size:12px;transform:scaleX(.91);width:150px;text-align:right;transform-origin:100% 0">-0.21</div>
<div class="t" style="left:1104px;top:738px;font-size:12px;transform:scaleX(.91);width:150px;text-align:right;transform-origin:100% 0">140150087</div>
<div class="a" style="left:16px;top:756px;width:1243px;height:20px;background:#ffffff;border-bottom:1px solid #cdcdcd"></div>
<div class="a" style="left:566px;top:756px;width:64px;height:19px;background:#5ff05f"></div>
<div class="a" style="left:100px;top:756px;width:1px;height:20px;background:#c8c8c8"></div>
<div class="a" style="left:248px;top:756px;width:1px;height:20px;background:#c8c8c8"></div>
<div class="a" style="left:313px;top:756px;width:1px;height:20px;background:#c8c8c8"></div>
<div class="a" style="left:367px;top:756px;width:1px;height:20px;background:#c8c8c8"></div>
<div class="a" style="left:432px;top:756px;width:1px;height:20px;background:#c8c8c8"></div>
<div class="a" style="left:498px;top:756px;width:1px;height:20px;background:#c8c8c8"></div>
<div class="a" style="left:565px;top:756px;width:1px;height:20px;background:#c8c8c8"></div>
<div class="a" style="left:631px;top:756px;width:1px;height:20px;background:#c8c8c8"></div>
<div class="a" style="left:778px;top:756px;width:1px;height:20px;background:#c8c8c8"></div>
<div class="a" style="left:844px;top:756px;width:1px;height:20px;background:#c8c8c8"></div>
<div class="a" style="left:910px;top:756px;width:1px;height:20px;background:#c8c8c8"></div>
<div class="a" style="left:977px;top:756px;width:1px;height:20px;background:#c8c8c8"></div>
<div class="a" style="left:1048px;top:756px;width:1px;height:20px;background:#c8c8c8"></div>
<svg class="a" style="left:19px;top:758px" width="14" height="16" viewBox="0 0 14 16"><path d="M1.5 1.5h6l3 3v9h-9z" fill="#f8fbff" stroke="#555"/><path d="M7.5 1.5v3h3" fill="none" stroke="#555"/><circle cx="9.5" cy="12" r="3.3" fill="#e8501e" stroke="#a83010" stroke-width=".8"/></svg>
<div class="t" style="left:38px;top:758px;font-size:12px;transform:scaleX(.91);transform-origin:0 0">141498233</div>
<div class="t" style="left:94px;top:758px;font-size:12px;transform:scaleX(.91);width:150px;text-align:right;transform-origin:100% 0">2017.01.11 19:47:02</div>
<div class="t" style="left:160px;top:758px;font-size:12px;transform:scaleX(.91);width:150px;text-align:right;transform-origin:100% 0">sell</div>
<div class="t" style="left:213px;top:758px;font-size:12px;transform:scaleX(.91);width:150px;text-align:right;transform-origin:100% 0">0.02</div>
<div class="t" style="left:279px;top:758px;font-size:12px;transform:scaleX(.91);width:150px;text-align:right;transform-origin:100% 0">chfjpy</div>
<div class="t" style="left:345px;top:758px;font-size:12px;transform:scaleX(.91);width:150px;text-align:right;transform-origin:100% 0">113.546</div>
<div class="t" style="left:411px;top:758px;font-size:12px;transform:scaleX(.91);width:150px;text-align:right;transform-origin:100% 0">0.000</div>
<div class="t" style="left:477px;top:758px;font-size:12px;transform:scaleX(.91);width:150px;text-align:right;transform-origin:100% 0">113.204</div>
<div class="t" style="left:624px;top:758px;font-size:12px;transform:scaleX(.91);width:150px;text-align:right;transform-origin:100% 0">2017.01.12 04:29:27</div>
<div class="t" style="left:691px;top:758px;font-size:12px;transform:scaleX(.91);width:150px;text-align:right;transform-origin:100% 0">113.204</div>
<div class="t" style="left:756px;top:758px;font-size:12px;transform:scaleX(.91);width:150px;text-align:right;transform-origin:100% 0">-0.20</div>
<div class="t" style="left:822px;top:758px;font-size:12px;transform:scaleX(.91);width:150px;text-align:right;transform-origin:100% 0">0.06</div>
<div class="t" style="left:895px;top:758px;font-size:12px;transform:scaleX(.91);width:150px;text-align:right;transform-origin:100% 0">5.97</div>
<div class="t" style="left:1104px;top:758px;font-size:12px;letter-spacing:.4px;width:150px;text-align:right;transform:scaleX(.95);transform-origin:100% 0">bbs+++1[tp]</div>
<div class="a" style="left:16px;top:776px;width:1243px;height:20px;background:#ebebeb;border-bottom:1px solid #cdcdcd"></div>
<div class="a" style="left:566px;top:776px;width:64px;height:19px;background:#5ff05f"></div>
<div class="a" style="left:100px;top:776px;width:1px;height:20px;background:#c8c8c8"></div>
<div class="a" style="left:248px;top:776px;width:1px;height:20px;background:#c8c8c8"></div>
<div class="a" style="left:313px;top:776px;width:1px;height:20px;background:#c8c8c8"></div>
<div class="a" style="left:367px;top:776px;width:1px;height:20px;background:#c8c8c8"></div>
<div class="a" style="left:432px;top:776px;width:1px;height:20px;background:#c8c8c8"></div>
<div class="a" style="left:498px;top:776px;width:1px;height:20px;background:#c8c8c8"></div>
<div class="a" style="left:565px;top:776px;width:1px;height:20px;background:#c8c8c8"></div>
<div class="a" style="left:631px;top:776px;width:1px;height:20px;background:#c8c8c8"></div>
<div class="a" style="left:778px;top:776px;width:1px;height:20px;background:#c8c8c8"></div>
<div class="a" style="left:844px;top:776px;width:1px;height:20px;background:#c8c8c8"></div>
<div class="a" style="left:910px;top:776px;width:1px;height:20px;background:#c8c8c8"></div>
<div class="a" style="left:977px;top:776px;width:1px;height:20px;background:#c8c8c8"></div>
<div class="a" style="left:1048px;top:776px;width:1px;height:20px;background:#c8c8c8"></div>
<svg class="a" style="left:19px;top:778px" width="14" height="16" viewBox="0 0 14 16"><path d="M1.5 1.5h6l3 3v9h-9z" fill="#f8fbff" stroke="#555"/><path d="M7.5 1.5v3h3" fill="none" stroke="#555"/><circle cx="9.5" cy="12" r="3.3" fill="#2a8ad8" stroke="#1a5a9a" stroke-width=".8"/></svg>
<div class="t" style="left:38px;top:778px;font-size:12px;transform:scaleX(.91);transform-origin:0 0">141546064</div>
<div class="t" style="left:94px;top:778px;font-size:12px;transform:scaleX(.91);width:150px;text-align:right;transform-origin:100% 0">2017.01.12 01:38:34</div>
<div class="t" style="left:160px;top:778px;font-size:12px;transform:scaleX(.91);width:150px;text-align:right;transform-origin:100% 0">buy</div>
<div class="t" style="left:213px;top:778px;font-size:12px;transform:scaleX(.91);width:150px;text-align:right;transform-origin:100% 0">0.06</div>
<div class="t" style="left:279px;top:778px;font-size:12px;transform:scaleX(.91);width:150px;text-align:right;transform-origin:100% 0">gbpusd</div>
<div class="t" style="left:345px;top:778px;font-size:12px;transform:scaleX(.91);width:150px;text-align:right;transform-origin:100% 0">1.21822</div>
<div class="t" style="left:411px;top:778px;font-size:12px;transform:scaleX(.91);width:150px;text-align:right;transform-origin:100% 0">0.00000</div>
<div class="t" style="left:477px;top:778px;font-size:12px;transform:scaleX(.91);width:150px;text-align:right;transform-origin:100% 0">1.22348</div>
<div class="t" style="left:624px;top:778px;font-size:12px;transform:scaleX(.91);width:150px;text-align:right;transform-origin:100% 0">2017.01.12 07:39:21</div>
<div class="t" style="left:691px;top:778px;font-size:12px;transform:scaleX(.91);width:150px;text-align:right;transform-origin:100% 0">1.22348</div>
<div class="t" style="left:756px;top:778px;font-size:12px;transform:scaleX(.91);width:150px;text-align:right;transform-origin:100% 0">-0.60</div>
<div class="t" style="left:822px;top:778px;font-size:12px;transform:scaleX(.91);width:150px;text-align:right;transform-origin:100% 0">0.00</div>
<div class="t" style="left:895px;top:778px;font-size:12px;transform:scaleX(.91);width:150px;text-align:right;transform-origin:100% 0">31.56</div>
<div class="t" style="left:1104px;top:778px;font-size:12px;letter-spacing:.4px;width:150px;text-align:right;transform:scaleX(.95);transform-origin:100% 0">bbb+++5[tp]</div>
<div class="a" style="left:16px;top:796px;width:1243px;height:20px;background:#ffffff;border-bottom:1px solid #cdcdcd"></div>
<div class="a" style="left:566px;top:796px;width:64px;height:19px;background:#5ff05f"></div>
<div class="a" style="left:100px;top:796px;width:1px;height:20px;background:#c8c8c8"></div>
<div class="a" style="left:248px;top:796px;width:1px;height:20px;background:#c8c8c8"></div>
<div class="a" style="left:313px;top:796px;width:1px;height:20px;background:#c8c8c8"></div>
<div class="a" style="left:367px;top:796px;width:1px;height:20px;background:#c8c8c8"></div>
<div class="a" style="left:432px;top:796px;width:1px;height:20px;background:#c8c8c8"></div>
<div class="a" style="left:498px;top:796px;width:1px;height:20px;background:#c8c8c8"></div>
<div class="a" style="left:565px;top:796px;width:1px;height:20px;background:#c8c8c8"></div>
<div class="a" style="left:631px;top:796px;width:1px;height:20px;background:#c8c8c8"></div>
<div class="a" style="left:778px;top:796px;width:1px;height:20px;background:#c8c8c8"></div>
<div class="a" style="left:844px;top:796px;width:1px;height:20px;background:#c8c8c8"></div>
<div class="a" style="left:910px;top:796px;width:1px;height:20px;background:#c8c8c8"></div>
<div class="a" style="left:977px;top:796px;width:1px;height:20px;background:#c8c8c8"></div>
<div class="a" style="left:1048px;top:796px;width:1px;height:20px;background:#c8c8c8"></div>
<svg class="a" style="left:19px;top:798px" width="14" height="16" viewBox="0 0 14 16"><path d="M1.5 1.5h6l3 3v9h-9z" fill="#f8fbff" stroke="#555"/><path d="M7.5 1.5v3h3" fill="none" stroke="#555"/><circle cx="9.5" cy="12" r="3.3" fill="#2a8ad8" stroke="#1a5a9a" stroke-width=".8"/></svg>
<div class="t" style="left:38px;top:798px;font-size:12px;transform:scaleX(.91);transform-origin:0 0">141475742</div>
<div class="t" style="left:94px;top:798px;font-size:12px;transform:scaleX(.91);width:150px;text-align:right;transform-origin:100% 0">2017.01.11 19:17:20</div>
<div class="t" style="left:160px;top:798px;font-size:12px;transform:scaleX(.91);width:150px;text-align:right;transform-origin:100% 0">buy</div>
<div class="t" style="left:213px;top:798px;font-size:12px;transform:scaleX(.91);width:150px;text-align:right;transform-origin:100% 0">0.01</div>
<div class="t" style="left:279px;top:798px;font-size:12px;transform:scaleX(.91);width:150px;text-align:right;transform-origin:100% 0">gbpusd</div>
<div class="t" style="left:345px;top:798px;font-size:12px;transform:scaleX(.91);width:150px;text-align:right;transform-origin:100% 0">1.22317</div>
<div class="t" style="left:411px;top:798px;font-size:12px;transform:scaleX(.91);width:150px;text-align:right;transform-origin:100% 0">0.00000</div>
<div class="t" style="left:477px;top:798px;font-size:12px;transform:scaleX(.91);width:150px;text-align:right;transform-origin:100% 0">1.22780</div>
<div class="t" style="left:624px;top:798px;font-size:12px;transform:scaleX(.91);width:150px;text-align:right;transform-origin:100% 0">2017.01.12 09:10:32</div>
<div class="t" style="left:691px;top:798px;font-size:12px;transform:scaleX(.91);width:150px;text-align:right;transform-origin:100% 0">1.22794</div>
<div class="t" style="left:756px;top:798px;font-size:12px;transform:scaleX(.91);width:150px;text-align:right;transform-origin:100% 0">-0.10</div>
<div class="t" style="left:822px;top:798px;font-size:12px;transform:scaleX(.91);width:150px;text-align:right;transform-origin:100% 0">-0.08</div>
<div class="t" style="left:895px;top:798px;font-size:12px;transform:scaleX(.91);width:150px;text-align:right;transform-origin:100% 0">4.77</div>
<div class="t" style="left:1104px;top:798px;font-size:12px;letter-spacing:.4px;width:150px;text-align:right;transform:scaleX(.95);transform-origin:100% 0">bbb+++4[tp]</div>
<div class="a" style="left:16px;top:816px;width:1243px;height:20px;background:#ebebeb;border-bottom:1px solid #cdcdcd"></div>
<div class="a" style="left:566px;top:816px;width:64px;height:19px;background:#5ff05f"></div>
<div class="a" style="left:100px;top:816px;width:1px;height:20px;background:#c8c8c8"></div>
<div class="a" style="left:248px;top:816px;width:1px;height:20px;background:#c8c8c8"></div>
<div class="a" style="left:313px;top:816px;width:1px;height:20px;background:#c8c8c8"></div>
<div class="a" style="left:367px;top:816px;width:1px;height:20px;background:#c8c8c8"></div>
<div class="a" style="left:432px;top:816px;width:1px;height:20px;background:#c8c8c8"></div>
<div class="a" style="left:498px;top:816px;width:1px;height:20px;background:#c8c8c8"></div>
<div class="a" style="left:565px;top:816px;width:1px;height:20px;background:#c8c8c8"></div>
<div class="a" style="left:631px;top:816px;width:1px;height:20px;background:#c8c8c8"></div>
<div class="a" style="left:778px;top:816px;width:1px;height:20px;background:#c8c8c8"></div>
<div class="a" style="left:844px;top:816px;width:1px;height:20px;background:#c8c8c8"></div>
<div class="a" style="left:910px;top:816px;width:1px;height:20px;background:#c8c8c8"></div>
<div class="a" style="left:977px;top:816px;width:1px;height:20px;background:#c8c8c8"></div>
<div class="a" style="left:1048px;top:816px;width:1px;height:20px;background:#c8c8c8"></div>
<svg class="a" style="left:19px;top:818px" width="14" height="16" viewBox="0 0 14 16"><path d="M1.5 1.5h6l3 3v9h-9z" fill="#f8fbff" stroke="#555"/><path d="M7.5 1.5v3h3" fill="none" stroke="#555"/><circle cx="9.5" cy="12" r="3.3" fill="#2a8ad8" stroke="#1a5a9a" stroke-width=".8"/></svg>
<div class="t" style="left:38px;top:818px;font-size:12px;transform:scaleX(.91);transform-origin:0 0">141633214</div>
<div class="t" style="left:94px;top:818px;font-size:12px;transform:scaleX(.91);width:150px;text-align:right;transform-origin:100% 0">2017.01.12 10:09:06</div>
<div class="t" style="left:160px;top:818px;font-size:12px;transform:scaleX(.91);width:150px;text-align:right;transform-origin:100% 0">buy</div>
<div class="t" style="left:213px;top:818px;font-size:12px;transform:scaleX(.91);width:150px;text-align:right;transform-origin:100% 0">0.02</div>
<div class="t" style="left:279px;top:818px;font-size:12px;transform:scaleX(.91);width:150px;text-align:right;transform-origin:100% 0">eurcad</div>
<div class="t" style="left:345px;top:818px;font-size:12px;transform:scaleX(.91);width:150px;text-align:right;transform-origin:100% 0">1.38938</div>
<div class="t" style="left:411px;top:818px;font-size:12px;transform:scaleX(.91);width:150px;text-align:right;transform-origin:100% 0">0.00000</div>
<div class="t" style="left:477px;top:818px;font-size:12px;transform:scaleX(.91);width:150px;text-align:right;transform-origin:100% 0">1.39257</div>
<div class="t" style="left:624px;top:818px;font-size:12px;transform:scaleX(.91);width:150px;text-align:right;transform-origin:100% 0">2017.01.12 13:08:24</div>
<div class="t" style="left:691px;top:818px;font-size:12px;transform:scaleX(.91);width:150px;text-align:right;transform-origin:100% 0">1.39257</div>
<div class="t" style="left:756px;top:818px;font-size:12px;transform:scaleX(.91);width:150px;text-align:right;transform-origin:100% 0">-0.20</div>
<div class="t" style="left:822px;top:818px;font-size:12px;transform:scaleX(.91);width:150px;text-align:right;transform-origin:100% 0">0.00</div>
<div class="t" style="left:895px;top:818px;font-size:12px;transform:scaleX(.91);width:150px;text-align:right;transform-origin:100% 0">4.88</div>
<div class="t" style="left:1104px;top:818px;font-size:12px;letter-spacing:.4px;width:150px;text-align:right;transform:scaleX(.95);transform-origin:100% 0">bbb+++1[tp]</div>
<div class="a" style="left:16px;top:836px;width:1243px;height:20px;background:#ffffff;border-bottom:1px solid #cdcdcd"></div>
<div class="a" style="left:566px;top:836px;width:64px;height:19px;background:#5ff05f"></div>
<div class="a" style="left:100px;top:836px;width:1px;height:20px;background:#c8c8c8"></div>
<div class="a" style="left:248px;top:836px;width:1px;height:20px;background:#c8c8c8"></div>
<div class="a" style="left:313px;top:836px;width:1px;height:20px;background:#c8c8c8"></div>
<div class="a" style="left:367px;top:836px;width:1px;height:20px;background:#c8c8c8"></div>
<div class="a" style="left:432px;top:836px;width:1px;height:20px;background:#c8c8c8"></div>
<div class="a" style="left:498px;top:836px;width:1px;height:20px;background:#c8c8c8"></div>
<div class="a" style="left:565px;top:836px;width:1px;height:20px;background:#c8c8c8"></div>
<div class="a" style="left:631px;top:836px;width:1px;height:20px;background:#c8c8c8"></div>
<div class="a" style="left:778px;top:836px;width:1px;height:20px;background:#c8c8c8"></div>
<div class="a" style="left:844px;top:836px;width:1px;height:20px;background:#c8c8c8"></div>
<div class="a" style="left:910px;top:836px;width:1px;height:20px;background:#c8c8c8"></div>
<div class="a" style="left:977px;top:836px;width:1px;height:20px;background:#c8c8c8"></div>
<div class="a" style="left:1048px;top:836px;width:1px;height:20px;background:#c8c8c8"></div>
<svg class="a" style="left:19px;top:838px" width="14" height="16" viewBox="0 0 14 16"><path d="M1.5 1.5h6l3 3v9h-9z" fill="#f8fbff" stroke="#555"/><path d="M7.5 1.5v3h3" fill="none" stroke="#555"/><circle cx="9.5" cy="12" r="3.3" fill="#2a8ad8" stroke="#1a5a9a" stroke-width=".8"/></svg>
<div class="t" style="left:38px;top:838px;font-size:12px;transform:scaleX(.91);transform-origin:0 0">138755958</div>
<div class="t" style="left:94px;top:838px;font-size:12px;transform:scaleX(.91);width:150px;text-align:right;transform-origin:100% 0">2016.12.16 02:02:30</div>
<div class="t" style="left:160px;top:838px;font-size:12px;transform:scaleX(.91);width:150px;text-align:right;transform-origin:100% 0">buy</div>
<div class="t" style="left:213px;top:838px;font-size:12px;transform:scaleX(.91);width:150px;text-align:right;transform-origin:100% 0">0.01</div>
<div class="t" style="left:279px;top:838px;font-size:12px;transform:scaleX(.91);width:150px;text-align:right;transform-origin:100% 0">audcad</div>
<div class="t" style="left:345px;top:838px;font-size:12px;transform:scaleX(.91);width:150px;text-align:right;transform-origin:100% 0">0.98044</div>
<div class="t" style="left:411px;top:838px;font-size:12px;transform:scaleX(.91);width:150px;text-align:right;transform-origin:100% 0">0.00000</div>
<div class="t" style="left:477px;top:838px;font-size:12px;transform:scaleX(.91);width:150px;text-align:right;transform-origin:100% 0">0.98291</div>
<div class="t" style="left:624px;top:838px;font-size:12px;transform:scaleX(.91);width:150px;text-align:right;transform-origin:100% 0">2017.01.12 14:24:46</div>
<div class="t" style="left:691px;top:838px;font-size:12px;transform:scaleX(.91);width:150px;text-align:right;transform-origin:100% 0">0.98291</div>
<div class="t" style="left:756px;top:838px;font-size:12px;transform:scaleX(.91);width:150px;text-align:right;transform-origin:100% 0">-0.10</div>
<div class="t" style="left:822px;top:838px;font-size:12px;transform:scaleX(.91);width:150px;text-align:right;transform-origin:100% 0">0.50</div>
<div class="t" style="left:895px;top:838px;font-size:12px;transform:scaleX(.91);width:150px;text-align:right;transform-origin:100% 0">1.89</div>
<div class="t" style="left:1104px;top:838px;font-size:12px;letter-spacing:.4px;width:150px;text-align:right;transform:scaleX(.95);transform-origin:100% 0">bbb+++2[tp]</div>
<div class="a" style="left:16px;top:856px;width:1243px;height:20px;background:#ebebeb;border-bottom:1px solid #cdcdcd"></div>
<div class="a" style="left:566px;top:856px;width:64px;height:19px;background:#5ff05f"></div>
<div class="a" style="left:100px;top:856px;width:1px;height:20px;background:#c8c8c8"></div>
<div class="a" style="left:248px;top:856px;width:1px;height:20px;background:#c8c8c8"></div>
<div class="a" style="left:313px;top:856px;width:1px;height:20px;background:#c8c8c8"></div>
<div class="a" style="left:367px;top:856px;width:1px;height:20px;background:#c8c8c8"></div>
<div class="a" style="left:432px;top:856px;width:1px;height:20px;background:#c8c8c8"></div>
<div class="a" style="left:498px;top:856px;width:1px;height:20px;background:#c8c8c8"></div>
<div class="a" style="left:565px;top:856px;width:1px;height:20px;background:#c8c8c8"></div>
<div class="a" style="left:631px;top:856px;width:1px;height:20px;background:#c8c8c8"></div>
<div class="a" style="left:778px;top:856px;width:1px;height:20px;background:#c8c8c8"></div>
<div class="a" style="left:844px;top:856px;width:1px;height:20px;background:#c8c8c8"></div>
<div class="a" style="left:910px;top:856px;width:1px;height:20px;background:#c8c8c8"></div>
<div class="a" style="left:977px;top:856px;width:1px;height:20px;background:#c8c8c8"></div>
<div class="a" style="left:1048px;top:856px;width:1px;height:20px;background:#c8c8c8"></div>
<svg class="a" style="left:19px;top:858px" width="14" height="16" viewBox="0 0 14 16"><path d="M1.5 1.5h6l3 3v9h-9z" fill="#f8fbff" stroke="#555"/><path d="M7.5 1.5v3h3" fill="none" stroke="#555"/><circle cx="9.5" cy="12" r="3.3" fill="#2a8ad8" stroke="#1a5a9a" stroke-width=".8"/></svg>
<div class="t" style="left:38px;top:858px;font-size:12px;transform:scaleX(.91);transform-origin:0 0">141449228</div>
<div class="t" style="left:94px;top:858px;font-size:12px;transform:scaleX(.91);width:150px;text-align:right;transform-origin:100% 0">2017.01.11 18:34:52</div>
<div class="t" style="left:160px;top:858px;font-size:12px;transform:scaleX(.91);width:150px;text-align:right;transform-origin:100% 0">buy</div>
<div class="t" style="left:213px;top:858px;font-size:12px;transform:scaleX(.91);width:150px;text-align:right;transform-origin:100% 0">0.02</div>
<div class="t" style="left:279px;top:858px;font-size:12px;transform:scaleX(.91);width:150px;text-align:right;transform-origin:100% 0">eurcad</div>
<div class="t" style="left:345px;top:858px;font-size:12px;transform:scaleX(.91);width:150px;text-align:right;transform-origin:100% 0">1.39272</div>
<div class="t" style="left:411px;top:858px;font-size:12px;transform:scaleX(.91);width:150px;text-align:right;transform-origin:100% 0">0.00000</div>
<div class="t" style="left:477px;top:858px;font-size:12px;transform:scaleX(.91);width:150px;text-align:right;transform-origin:100% 0">1.39693</div>
<div class="t" style="left:624px;top:858px;font-size:12px;transform:scaleX(.91);width:150px;text-align:right;transform-origin:100% 0">2017.01.12 16:05:39</div>
<div class="t" style="left:691px;top:858px;font-size:12px;transform:scaleX(.91);width:150px;text-align:right;transform-origin:100% 0">1.39715</div>
<div class="t" style="left:756px;top:858px;font-size:12px;transform:scaleX(.91);width:150px;text-align:right;transform-origin:100% 0">-0.20</div>
<div class="t" style="left:822px;top:858px;font-size:12px;transform:scaleX(.91);width:150px;text-align:right;transform-origin:100% 0">-0.36</div>
<div class="t" style="left:895px;top:858px;font-size:12px;transform:scaleX(.91);width:150px;text-align:right;transform-origin:100% 0">6.76</div>
<div class="t" style="left:1104px;top:858px;font-size:12px;letter-spacing:.4px;width:150px;text-align:right;transform:scaleX(.95);transform-origin:100% 0">bbb0[tp]</div>
<div class="a" style="left:16px;top:876px;width:1243px;height:20px;background:#ffffff;border-bottom:1px solid #cdcdcd"></div>
<div class="a" style="left:100px;top:876px;width:1px;height:20px;background:#c8c8c8"></div>
<div class="a" style="left:248px;top:876px;width:1px;height:20px;background:#c8c8c8"></div>
<div class="a" style="left:313px;top:876px;width:1px;height:20px;background:#c8c8c8"></div>
<div class="a" style="left:367px;top:876px;width:1px;height:20px;background:#c8c8c8"></div>
<div class="a" style="left:432px;top:876px;width:1px;height:20px;background:#c8c8c8"></div>
<div class="a" style="left:498px;top:876px;width:1px;height:20px;background:#c8c8c8"></div>
<div class="a" style="left:565px;top:876px;width:1px;height:20px;background:#c8c8c8"></div>
<div class="a" style="left:631px;top:876px;width:1px;height:20px;background:#c8c8c8"></div>
<div class="a" style="left:778px;top:876px;width:1px;height:20px;background:#c8c8c8"></div>
<div class="a" style="left:844px;top:876px;width:1px;height:20px;background:#c8c8c8"></div>
<div class="a" style="left:910px;top:876px;width:1px;height:20px;background:#c8c8c8"></div>
<div class="a" style="left:977px;top:876px;width:1px;height:20px;background:#c8c8c8"></div>
<div class="a" style="left:1048px;top:876px;width:1px;height:20px;background:#c8c8c8"></div>
<svg class="a" style="left:19px;top:878px" width="14" height="16" viewBox="0 0 14 16"><path d="M1.5 1.5h6l3 3v9h-9z" fill="#f8fbff" stroke="#555"/><path d="M7.5 1.5v3h3" fill="none" stroke="#555"/><circle cx="9.5" cy="12" r="3.3" fill="#e8501e" stroke="#a83010" stroke-width=".8"/></svg>
<div class="t" style="left:38px;top:878px;font-size:12px;transform:scaleX(.91);transform-origin:0 0">140138429</div>
<div class="t" style="left:94px;top:878px;font-size:12px;transform:scaleX(.91);width:150px;text-align:right;transform-origin:100% 0">2017.01.02 02:37:45</div>
<div class="t" style="left:160px;top:878px;font-size:12px;transform:scaleX(.91);width:150px;text-align:right;transform-origin:100% 0">sell</div>
<div class="t" style="left:213px;top:878px;font-size:12px;transform:scaleX(.91);width:150px;text-align:right;transform-origin:100% 0">0.08</div>
<div class="t" style="left:279px;top:878px;font-size:12px;transform:scaleX(.91);width:150px;text-align:right;transform-origin:100% 0">cadjpy</div>
<div class="t" style="left:345px;top:878px;font-size:12px;transform:scaleX(.91);width:150px;text-align:right;transform-origin:100% 0">86.991</div>
<div class="t" style="left:411px;top:878px;font-size:12px;transform:scaleX(.91);width:150px;text-align:right;transform-origin:100% 0">0.000</div>
<div class="t" style="left:477px;top:878px;font-size:12px;transform:scaleX(.91);width:150px;text-align:right;transform-origin:100% 0">86.889</div>
<div class="t" style="left:624px;top:878px;font-size:12px;transform:scaleX(.91);width:150px;text-align:right;transform-origin:100% 0">2017.01.12 16:09:17</div>
<div class="t" style="left:691px;top:878px;font-size:12px;transform:scaleX(.91);width:150px;text-align:right;transform-origin:100% 0">86.916</div>
<div class="t" style="left:756px;top:878px;font-size:12px;transform:scaleX(.91);width:150px;text-align:right;transform-origin:100% 0">-0.80</div>
<div class="t" style="left:822px;top:878px;font-size:12px;transform:scaleX(.91);width:150px;text-align:right;transform-origin:100% 0">-3.23</div>
<div class="t" style="left:895px;top:878px;font-size:12px;transform:scaleX(.91);width:150px;text-align:right;transform-origin:100% 0">5.27</div>
<div class="t" style="left:1104px;top:878px;font-size:12px;transform:scaleX(.91);width:150px;text-align:right;transform-origin:100% 0">137167826</div>
<div class="a" style="left:16px;top:896px;width:1243px;height:20px;background:#ebebeb;border-bottom:1px solid #cdcdcd"></div>
<div class="a" style="left:100px;top:896px;width:1px;height:20px;background:#c8c8c8"></div>
<div class="a" style="left:248px;top:896px;width:1px;height:20px;background:#c8c8c8"></div>
<div class="a" style="left:313px;top:896px;width:1px;height:20px;background:#c8c8c8"></div>
<div class="a" style="left:367px;top:896px;width:1px;height:20px;background:#c8c8c8"></div>
<div class="a" style="left:432px;top:896px;width:1px;height:20px;background:#c8c8c8"></div>
<div class="a" style="left:498px;top:896px;width:1px;height:20px;background:#c8c8c8"></div>
<div class="a" style="left:565px;top:896px;width:1px;height:20px;background:#c8c8c8"></div>
<div class="a" style="left:631px;top:896px;width:1px;height:20px;background:#c8c8c8"></div>
<div class="a" style="left:778px;top:896px;width:1px;height:20px;background:#c8c8c8"></div>
<div class="a" style="left:844px;top:896px;width:1px;height:20px;background:#c8c8c8"></div>
<div class="a" style="left:910px;top:896px;width:1px;height:20px;background:#c8c8c8"></div>
<div class="a" style="left:977px;top:896px;width:1px;height:20px;background:#c8c8c8"></div>
<div class="a" style="left:1048px;top:896px;width:1px;height:20px;background:#c8c8c8"></div>
<svg class="a" style="left:19px;top:898px" width="14" height="16" viewBox="0 0 14 16"><path d="M1.5 1.5h6l3 3v9h-9z" fill="#f8fbff" stroke="#555"/><path d="M7.5 1.5v3h3" fill="none" stroke="#555"/><circle cx="9.5" cy="12" r="3.3" fill="#e8501e" stroke="#a83010" stroke-width=".8"/></svg>
<div class="t" style="left:38px;top:898px;font-size:12px;transform:scaleX(.91);transform-origin:0 0">140133705</div>
<div class="t" style="left:94px;top:898px;font-size:12px;transform:scaleX(.91);width:150px;text-align:right;transform-origin:100% 0">2017.01.02 00:13:12</div>
<div class="t" style="left:160px;top:898px;font-size:12px;transform:scaleX(.91);width:150px;text-align:right;transform-origin:100% 0">sell</div>
<div class="t" style="left:213px;top:898px;font-size:12px;transform:scaleX(.91);width:150px;text-align:right;transform-origin:100% 0">0.02</div>
<div class="t" style="left:279px;top:898px;font-size:12px;transform:scaleX(.91);width:150px;text-align:right;transform-origin:100% 0">cadjpy</div>
<div class="t" style="left:345px;top:898px;font-size:12px;transform:scaleX(.91);width:150px;text-align:right;transform-origin:100% 0">86.889</div>
<div class="t" style="left:411px;top:898px;font-size:12px;transform:scaleX(.91);width:150px;text-align:right;transform-origin:100% 0">86.831</div>
<div class="t" style="left:477px;top:898px;font-size:12px;transform:scaleX(.91);width:150px;text-align:right;transform-origin:100% 0">0.000</div>
<div class="t" style="left:624px;top:898px;font-size:12px;transform:scaleX(.91);width:150px;text-align:right;transform-origin:100% 0">2017.01.12 17:00:51</div>
<div class="t" style="left:691px;top:898px;font-size:12px;transform:scaleX(.91);width:150px;text-align:right;transform-origin:100% 0">86.766</div>
<div class="t" style="left:756px;top:898px;font-size:12px;transform:scaleX(.91);width:150px;text-align:right;transform-origin:100% 0">-0.20</div>
<div class="t" style="left:822px;top:898px;font-size:12px;transform:scaleX(.91);width:150px;text-align:right;transform-origin:100% 0">-0.82</div>
<div class="t" style="left:895px;top:898px;font-size:12px;transform:scaleX(.91);width:150px;text-align:right;transform-origin:100% 0">2.16</div>
<div class="t" style="left:1104px;top:898px;font-size:12px;transform:scaleX(.91);width:150px;text-align:right;transform-origin:100% 0">137167826</div>
<div class="a" style="left:16px;top:915px;width:1243px;height:21px;background:linear-gradient(#d0d0d0,#dadada 40%,#d6d6d6);border-bottom:1px solid #000"></div>
<svg class="a" style="left:24px;top:921px" width="10" height="10" viewBox="0 0 10 10"><circle cx="5" cy="5" r="4" fill="none" stroke="#9a9a9a" stroke-width="1.3"/><circle cx="5" cy="5" r="1.5" fill="#9a9a9a"/></svg>
<div class="t" style="left:38px;top:918px;font-size:12px;font-weight:bold;transform:scaleX(.977);transform-origin:0 0">Прибыль: 274.57&nbsp; Кредит: 0.00&nbsp; Депозит: 0.00&nbsp; Снятие: 0.00</div>
<div class="t" style="left:895px;top:918px;font-size:12px;font-weight:bold;width:150px;text-align:right">274.57</div>
<div class="a" style="left:1259px;top:691px;width:18px;height:244px;background:#f0f0f0;border-left:1px solid #e8e8e8"></div>
<svg class="a" style="left:1264px;top:698px" width="8" height="5" viewBox="0 0 8 5"><path d="M0 5L4 0.5 8 5Z" fill="#3a3a3a"/></svg>
<svg class="a" style="left:1264px;top:926px" width="8" height="5" viewBox="0 0 8 5"><path d="M0 0L4 4.5 8 0Z" fill="#3a3a3a"/></svg>
<div class="a" style="left:1260px;top:896px;width:15px;height:20px;border:1px solid #a8a8a8;border-radius:2px;background:linear-gradient(90deg,#f2f2f2,#e0e0e0 50%,#d0d0d0)"></div>
<svg class="a" style="left:1264px;top:902px" width="8" height="6" viewBox="0 0 8 6"><path d="M0 0.5h8M0 2.5h8M0 4.5h8" stroke="#666"/></svg>
<div class="a" style="left:16px;top:936px;width:1264px;height:24px;background:#f0f0f0"></div>
<div class="a" style="left:151px;top:936px;width:102px;height:19px;background:#fff;border:1px solid #000;border-top:none;border-bottom:2px solid #000;border-right:2px solid #000"></div>
<div class="t" style="left:28px;top:939px;font-size:12px;color:#7a7a7a;transform:scaleX(.97);transform-origin:0 0">Торговля</div>
<div class="t" style="left:100px;top:939px;font-size:12px;color:#7a7a7a;transform:scaleX(.97);transform-origin:0 0">Активы</div>
<div class="t" style="left:160px;top:939px;font-size:12px;color:#000;transform:scaleX(.97);transform-origin:0 0">История Счета</div>
<div class="t" style="left:263px;top:939px;font-size:12px;color:#7a7a7a;transform:scaleX(.97);transform-origin:0 0">Новости</div>
<div class="t" style="left:342px;top:939px;font-size:12px;color:#7a7a7a;transform:scaleX(.97);transform-origin:0 0">Алерты</div>
<div class="t" style="left:404px;top:939px;font-size:12px;color:#7a7a7a;transform:scaleX(.97);transform-origin:0 0">Почта</div>
<div class="t" style="left:458px;top:939px;font-size:12px;color:#7a7a7a;transform:scaleX(.97);transform-origin:0 0">Маркет</div>
<div class="t" style="left:519px;top:939px;font-size:12px;color:#7a7a7a;transform:scaleX(.97);transform-origin:0 0">Сигналы</div>
<div class="t" style="left:588px;top:939px;font-size:12px;color:#7a7a7a;transform:scaleX(.97);transform-origin:0 0">Библиотека</div>
<div class="t" style="left:672px;top:939px;font-size:12px;color:#7a7a7a;transform:scaleX(.97);transform-origin:0 0">Эксперты</div>
<div class="t" style="left:746px;top:939px;font-size:12px;color:#7a7a7a;transform:scaleX(.97);transform-origin:0 0">Журнал</div>
<div class="t" style="left:311px;top:943px;font-size:9.5px;color:#c82828;font-weight:bold">99</div>
<div class="a" style="left:90px;top:940px;width:1px;height:13px;background:#8a8a8a"></div>
<div class="a" style="left:332px;top:940px;width:1px;height:13px;background:#8a8a8a"></div>
<div class="a" style="left:394px;top:940px;width:1px;height:13px;background:#8a8a8a"></div>
<div class="a" style="left:448px;top:940px;width:1px;height:13px;background:#8a8a8a"></div>
<div class="a" style="left:509px;top:940px;width:1px;height:13px;background:#8a8a8a"></div>
<div class="a" style="left:578px;top:940px;width:1px;height:13px;background:#8a8a8a"></div>
<div class="a" style="left:662px;top:940px;width:1px;height:13px;background:#8a8a8a"></div>
<div class="a" style="left:736px;top:940px;width:1px;height:13px;background:#8a8a8a"></div>
<div class="a" style="left:801px;top:940px;width:1px;height:13px;background:#8a8a8a"></div>
<div class="a" style="left:0px;top:960px;width:1280px;height:24px;background:linear-gradient(#f0f0f0 90%,#f6f8fa);border-top:1px solid #a0a0a0"></div>
<div class="t" style="left:2px;top:967px;font-size:12px">Выбор страницы</div>
<div class="a" style="left:586px;top:963px;width:1px;height:20px;background:#c8c8c8"></div>
<div class="a" style="left:702px;top:963px;width:1px;height:20px;background:#c8c8c8"></div>
<div class="a" style="left:804px;top:963px;width:1px;height:20px;background:#c8c8c8"></div>
<div class="a" style="left:875px;top:963px;width:1px;height:20px;background:#c8c8c8"></div>
<div class="a" style="left:946px;top:963px;width:1px;height:20px;background:#c8c8c8"></div>
<div class="a" style="left:1014px;top:963px;width:1px;height:20px;background:#c8c8c8"></div>
<div class="a" style="left:1084px;top:963px;width:1px;height:20px;background:#c8c8c8"></div>
<div class="a" style="left:1152px;top:963px;width:1px;height:20px;background:#c8c8c8"></div>
<div class="t" style="left:592px;top:967px;font-size:12px">Default</div>
<svg class="a" style="left:1155px;top:966px" width="24" height="14" viewBox="0 0 24 14"><rect x="0.0" y="0" width="1.5" height="14" fill="#88aa22"/><rect x="2.5" y="0" width="1.5" height="14" fill="#88aa22"/><rect x="5.0" y="0" width="1.5" height="14" fill="#88aa22"/><rect x="7.5" y="0" width="1.5" height="14" fill="#88aa22"/><rect x="10.0" y="0" width="1.5" height="14" fill="#88aa22"/><rect x="12.5" y="0" width="1.5" height="14" fill="#88aa22"/><rect x="15.0" y="0" width="1.5" height="14" fill="#1a3a7a"/><rect x="17.5" y="0" width="1.5" height="14" fill="#1a3a7a"/><rect x="20.0" y="0" width="1.5" height="14" fill="#1a3a7a"/><rect x="0" y="6" width="23" height="8" fill="#1a4a8a" opacity=".55"/></svg>
<div class="t" style="left:1182px;top:967px;font-size:12px">117501/65 kb</div>
<div class="a" style="left:0px;top:984px;width:1280px;height:40px;background:linear-gradient(90deg,#8c9fba 0,#96abc6 60px,#a9c2de 260px,#a9c2de 1000px,#93a8c2 1045px,#8a9db7 1100px,#8a9db7 1280px)"></div>
<div class="a" style="left:0px;top:984px;width:1280px;height:1px;background:#434e5e"></div>
<div class="a" style="left:0px;top:985px;width:1280px;height:1px;background:rgba(255,255,255,.45)"></div>
<div class="a" style="left:0px;top:986px;width:1280px;height:1px;background:rgba(255,255,255,.12)"></div>
<svg class="a" style="left:7px;top:986px" width="40" height="38" viewBox="0 0 40 38"><defs><radialGradient id="orb" cx="50%" cy="35%" r="65%"><stop offset="0" stop-color="#a8dcf8"/><stop offset=".45" stop-color="#3a8ed0"/><stop offset=".8" stop-color="#1a5aa0"/><stop offset="1" stop-color="#2a7ac0"/></radialGradient></defs><circle cx="20" cy="18.5" r="17.5" fill="url(#orb)" stroke="#1a3a60" stroke-width="1"/><path d="M11 11c3-2 5-1 8 0l-1 6c-3-1-5-2-8 0z" fill="#f06a2a"/><path d="M20 11c3 1 5 2 8 0l-1 6c-3 2-5 1-8 0z" fill="#8ad040"/><path d="M10 18c3-2 5-1 8 0l-1 6c-3-1-5-2-8 0z" fill="#30a8f0"/><path d="M19 18c3 1 5 2 8 0l-1 6c-3 2-5 1-8 0z" fill="#f8c830"/><ellipse cx="20" cy="9" rx="12" ry="6" fill="#fff" opacity=".18"/></svg>
<svg class="a" style="left:72px;top:988px" width="32" height="34" viewBox="0 0 32 34"><path d="M8 3l22 2v20l-22-4z" fill="#1a3ac8" stroke="#c8d8f0" stroke-width="1.2"/><path d="M10 6l18 2v14l-18-3z" fill="#3060e0"/><path d="M0 11h22v8H0z" fill="#f4f8ff" stroke="#8ab0e0" stroke-width=".8"/><path d="M2 13.5h18M2 16h18" stroke="#3a8ae0" stroke-width="1.3" stroke-dasharray="2 .8"/><path d="M14 25h10l2 5H12z" fill="#e8eef4" opacity=".8"/></svg>
<div class="a" style="left:121px;top:985px;width:60px;height:39px;border:1px solid #1e2a38;border-radius:2px;background:linear-gradient(#f6f9fc,#e4ebf3 50%,#dce5ef);box-shadow:inset 0 0 0 1px #fff"></div>
<svg class="a" style="left:135px;top:988px" width="32" height="32" viewBox="0 0 32 32"><rect x="0" y="0" width="32" height="32" fill="#141414"/><path d="M8 7h8v2.5H8z" fill="#e8e8f0"/><path d="M23 0h7l-6 12v5h-5v-5z" fill="#5cb82c"/><path d="M24 6h5v10h-5z" fill="#4a9a22"/><path d="M2 16h5l4 6 4-6h5l-6 8 6 8h-5l-4-6-4 6H2l6-8z" fill="#6cc03a" stroke="#d8f0c8" stroke-width=".7"/><path d="M21 18h4v10h4v3h-8z" fill="#141414" stroke="#cfd8e0" stroke-width=".7"/></svg>
<div class="t" style="left:1063px;top:995px;font-size:11.5px;color:#f4f8fc">EN</div>
<svg class="a" style="left:1093px;top:996px" width="16" height="16" viewBox="0 0 16 16"><rect x="0.5" y="0.5" width="15" height="15" rx="2" fill="#2a3a1a" stroke="#111"/><ellipse cx="8" cy="8" rx="6" ry="4" fill="none" stroke="#76b900" stroke-width="2"/><circle cx="8" cy="8" r="1.5" fill="#76b900"/></svg>
<svg class="a" style="left:1118px;top:995px" width="18" height="18" viewBox="0 0 18 18"><circle cx="9" cy="9" r="8.5" fill="#f8b820" opacity=".6"/><circle cx="9" cy="9" r="6" fill="#f0a010"/><circle cx="9" cy="9" r="3" fill="#fff"/></svg>
<svg class="a" style="left:1143px;top:996px" width="18" height="17" viewBox="0 0 18 17"><rect x="5" y="3" width="12" height="10" fill="#dde6ee" stroke="#fff" stroke-width="1.2"/><path d="M8 15h6" stroke="#fff" stroke-width="1.5"/><path d="M2 0v9M4 0v9M1 9h4" stroke="#fff" stroke-width="1.2"/></svg>
<svg class="a" style="left:1165px;top:996px" width="18" height="17" viewBox="0 0 18 17"><path d="M1 6h3l5-5v15l-5-5H1z" fill="#f4f8fc" stroke="#667" stroke-width=".6"/><path d="M11 5c2 2 2 5 0 7M13 3c3 3 3 8 0 11" stroke="#f4f8fc" stroke-width="1.2" fill="none"/></svg>
<div class="t" style="left:1212px;top:990px;font-size:11.5px;color:#f4f8fc">19:03</div>
<div class="t" style="left:1200px;top:1007px;font-size:11.5px;color:#f4f8fc">12.01.2017</div>
<div class="a" style="left:1266px;top:986px;width:14px;height:38px;border-left:1px solid #7a8aa0;background:linear-gradient(90deg,#8da4c0,#a0b4cc)"></div>
</body></html>
